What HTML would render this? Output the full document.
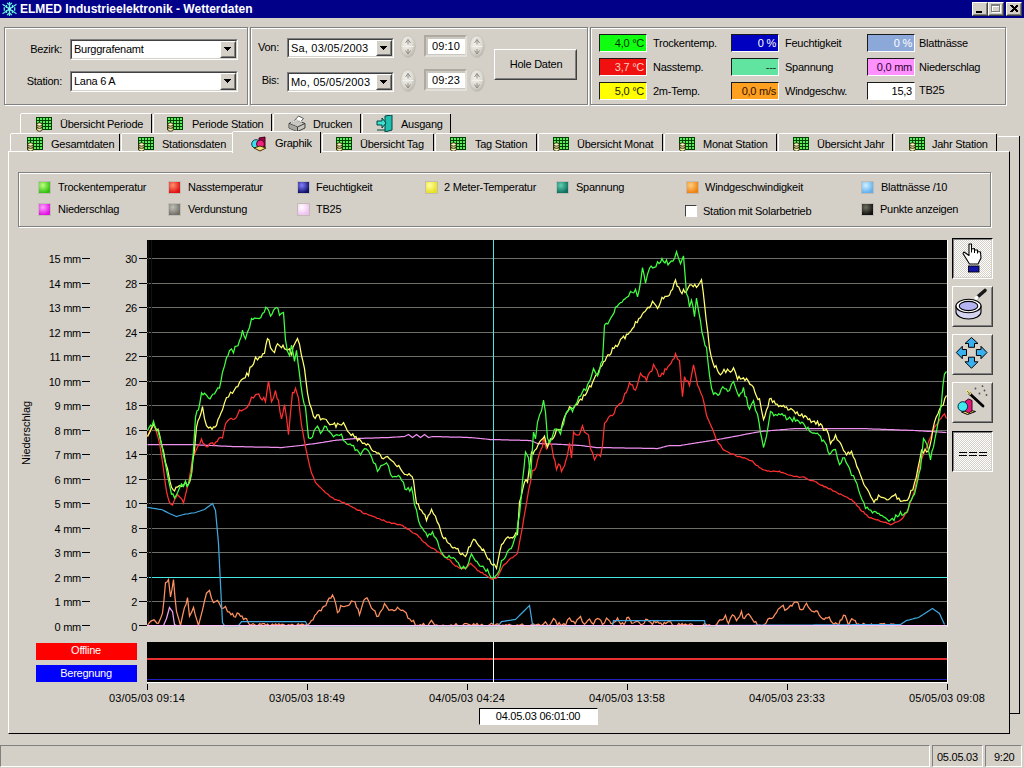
<!DOCTYPE html><html><head><meta charset="utf-8"><style>
html,body{margin:0;padding:0}
body{width:1024px;height:768px;overflow:hidden;position:relative;background:#d4d0c8;font-family:"Liberation Sans",sans-serif;font-size:11px;color:#000}
.a{position:absolute}
.t{position:absolute;white-space:nowrap;line-height:13px}
svg{display:block}
</style></head><body>
<div class="a" style="left:0px;top:0px;width:1024px;height:18px;background:#000088"></div>
<svg class="a" style="left:0px;top:0px" width="19" height="18" viewBox="0 0 19 18"><g stroke="#68ecdc" stroke-width="1.3" fill="none"><path d="M9.5 2v14M2.5 4.3L16.5 13.7M2.5 13.7L16.5 4.3"/><path d="M4.3 7.3v3.4M14.7 7.3v3.4M7 3l2.5 2 2.5-2M7 15l2.5-2 2.5 2M6.5 5v3M12.5 5v3M6.5 10v3M12.5 10v3"/></g><rect x="8" y="7.5" width="3" height="3" fill="#80f4e8"/></svg>
<div class="t" style="left:20px;top:3px;font-size:12px;color:#fff;font-weight:bold;letter-spacing:0px;">ELMED Industrieelektronik - Wetterdaten</div>
<div class="a" style="left:972px;top:2px;width:16px;height:14px;box-sizing:border-box;border:1px solid;border-color:#fff #404040 #404040 #fff;background:#d4d0c8"></div>
<div class="a" style="left:973px;top:3px;width:14px;height:12px;box-sizing:border-box;border:1px solid;border-color:#d4d0c8 #808080 #808080 #d4d0c8"></div>
<div class="a" style="left:976px;top:11px;width:6px;height:2px;background:#000"></div>
<div class="a" style="left:988px;top:2px;width:16px;height:14px;box-sizing:border-box;border:1px solid;border-color:#fff #404040 #404040 #fff;background:#d4d0c8"></div>
<div class="a" style="left:989px;top:3px;width:14px;height:12px;box-sizing:border-box;border:1px solid;border-color:#d4d0c8 #808080 #808080 #d4d0c8"></div>
<div class="a" style="left:992px;top:5px;width:9px;height:8px;box-sizing:border-box;border:1px solid #fff;border-top-width:2px"></div>
<div class="a" style="left:991px;top:4px;width:9px;height:8px;box-sizing:border-box;border:1px solid #808080;border-top-width:2px"></div>
<div class="a" style="left:1006px;top:2px;width:16px;height:14px;box-sizing:border-box;border:1px solid;border-color:#fff #404040 #404040 #fff;background:#d4d0c8"></div>
<div class="a" style="left:1007px;top:3px;width:14px;height:12px;box-sizing:border-box;border:1px solid;border-color:#d4d0c8 #808080 #808080 #d4d0c8"></div>
<svg class="a" style="left:1010px;top:5px" width="8" height="7" shape-rendering="crispEdges"><path d="M0 0h2l2 2 2-2h2v1l-2.5 2.5 2.5 2.5v1h-2l-2-2-2 2h-2v-1l2.5-2.5-2.5-2.5z" fill="#000"/></svg>
<div class="a" style="left:5px;top:28px;width:243px;height:77px;border:1px solid #fff;box-sizing:border-box;width:244px;height:78px"></div>
<div class="a" style="left:4px;top:27px;width:244px;height:78px;border:1px solid #808080;box-sizing:border-box"></div>
<div class="a" style="left:251px;top:28px;width:337px;height:77px;border:1px solid #fff;box-sizing:border-box;width:338px;height:78px"></div>
<div class="a" style="left:250px;top:27px;width:338px;height:78px;border:1px solid #808080;box-sizing:border-box"></div>
<div class="a" style="left:591px;top:28px;width:415px;height:77px;border:1px solid #fff;box-sizing:border-box;width:416px;height:78px"></div>
<div class="a" style="left:590px;top:27px;width:416px;height:78px;border:1px solid #808080;box-sizing:border-box"></div>
<div class="t" style="right:962px;top:43px;font-size:11px;color:#000;letter-spacing:-0.25px;">Bezirk:</div>
<div class="t" style="right:962px;top:75px;font-size:11px;color:#000;letter-spacing:-0.25px;">Station:</div>
<div class="a" style="left:70px;top:39px;width:168px;height:21px;box-sizing:border-box;border:1px solid;border-color:#808080 #fff #fff #808080;background:#fff"></div>
<div class="a" style="left:71px;top:40px;width:166px;height:19px;box-sizing:border-box;border:1px solid;border-color:#404040 #d4d0c8 #d4d0c8 #404040"></div>
<div class="a" style="left:220px;top:41px;width:16px;height:17px;box-sizing:border-box;border:1px solid;border-color:#fff #404040 #404040 #fff;background:#d4d0c8"></div>
<div class="a" style="left:221px;top:42px;width:14px;height:15px;box-sizing:border-box;border:1px solid;border-color:#d4d0c8 #808080 #808080 #d4d0c8"></div>
<svg class="a" style="left:224px;top:47px" width="8" height="5" shape-rendering="crispEdges"><path d="M0 0h7v1h-1v1h-1v1h-1v1h-1v-1h-1v-1h-1v-1h-1z" fill="#000"/></svg>
<div class="t" style="left:74px;top:43px;font-size:11px;color:#000;letter-spacing:-0.25px;">Burggrafenamt</div>
<div class="a" style="left:70px;top:71px;width:168px;height:21px;box-sizing:border-box;border:1px solid;border-color:#808080 #fff #fff #808080;background:#fff"></div>
<div class="a" style="left:71px;top:72px;width:166px;height:19px;box-sizing:border-box;border:1px solid;border-color:#404040 #d4d0c8 #d4d0c8 #404040"></div>
<div class="a" style="left:220px;top:73px;width:16px;height:17px;box-sizing:border-box;border:1px solid;border-color:#fff #404040 #404040 #fff;background:#d4d0c8"></div>
<div class="a" style="left:221px;top:74px;width:14px;height:15px;box-sizing:border-box;border:1px solid;border-color:#d4d0c8 #808080 #808080 #d4d0c8"></div>
<svg class="a" style="left:224px;top:79px" width="8" height="5" shape-rendering="crispEdges"><path d="M0 0h7v1h-1v1h-1v1h-1v1h-1v-1h-1v-1h-1v-1h-1z" fill="#000"/></svg>
<div class="t" style="left:74px;top:75px;font-size:11px;color:#000;letter-spacing:-0.25px;">Lana 6 A</div>
<div class="t" style="right:745px;top:41px;font-size:11px;color:#000;letter-spacing:-0.25px;">Von:</div>
<div class="t" style="right:745px;top:74px;font-size:11px;color:#000;letter-spacing:-0.25px;">Bis:</div>
<div class="a" style="left:287px;top:38px;width:107px;height:20px;box-sizing:border-box;border:1px solid;border-color:#808080 #fff #fff #808080;background:#fff"></div>
<div class="a" style="left:288px;top:39px;width:105px;height:18px;box-sizing:border-box;border:1px solid;border-color:#404040 #d4d0c8 #d4d0c8 #404040"></div>
<div class="a" style="left:376px;top:40px;width:16px;height:16px;box-sizing:border-box;border:1px solid;border-color:#fff #404040 #404040 #fff;background:#d4d0c8"></div>
<div class="a" style="left:377px;top:41px;width:14px;height:14px;box-sizing:border-box;border:1px solid;border-color:#d4d0c8 #808080 #808080 #d4d0c8"></div>
<svg class="a" style="left:380px;top:46px" width="8" height="5" shape-rendering="crispEdges"><path d="M0 0h7v1h-1v1h-1v1h-1v1h-1v-1h-1v-1h-1v-1h-1z" fill="#000"/></svg>
<div class="t" style="left:291px;top:42px;font-size:11px;color:#000;letter-spacing:0.2px;">Sa, 03/05/2003</div>
<div class="a" style="left:287px;top:72px;width:107px;height:20px;box-sizing:border-box;border:1px solid;border-color:#808080 #fff #fff #808080;background:#fff"></div>
<div class="a" style="left:288px;top:73px;width:105px;height:18px;box-sizing:border-box;border:1px solid;border-color:#404040 #d4d0c8 #d4d0c8 #404040"></div>
<div class="a" style="left:376px;top:74px;width:16px;height:16px;box-sizing:border-box;border:1px solid;border-color:#fff #404040 #404040 #fff;background:#d4d0c8"></div>
<div class="a" style="left:377px;top:75px;width:14px;height:14px;box-sizing:border-box;border:1px solid;border-color:#d4d0c8 #808080 #808080 #d4d0c8"></div>
<svg class="a" style="left:380px;top:80px" width="8" height="5" shape-rendering="crispEdges"><path d="M0 0h7v1h-1v1h-1v1h-1v1h-1v-1h-1v-1h-1v-1h-1z" fill="#000"/></svg>
<div class="t" style="left:291px;top:76px;font-size:11px;color:#000;letter-spacing:0.2px;">Mo, 05/05/2003</div>
<svg class="a" style="left:400px;top:35px" width="17" height="24" viewBox="0 0 17 24"><defs><radialGradient id="sg" cx="0.4" cy="0.35" r="0.7"><stop offset="0" stop-color="#f2f1ec"/><stop offset="0.6" stop-color="#dcdad2"/><stop offset="1" stop-color="#b4b0a8"/></radialGradient></defs><ellipse cx="8" cy="11.5" rx="7.4" ry="11" fill="url(#sg)" stroke="#c4c0b8" stroke-width="0.8"/><path d="M5.5 8l2.5-3.5 2.5 3.5M8 4.5v5M5.5 15.5l2.5 3.5 2.5-3.5M8 19v-5" stroke="#908c84" stroke-width="1" fill="none"/><path d="M2.5 11.5h11" stroke="#f4f3ee" stroke-width="1"/></svg>
<svg class="a" style="left:400px;top:69px" width="17" height="24" viewBox="0 0 17 24"><defs><radialGradient id="sg" cx="0.4" cy="0.35" r="0.7"><stop offset="0" stop-color="#f2f1ec"/><stop offset="0.6" stop-color="#dcdad2"/><stop offset="1" stop-color="#b4b0a8"/></radialGradient></defs><ellipse cx="8" cy="11.5" rx="7.4" ry="11" fill="url(#sg)" stroke="#c4c0b8" stroke-width="0.8"/><path d="M5.5 8l2.5-3.5 2.5 3.5M8 4.5v5M5.5 15.5l2.5 3.5 2.5-3.5M8 19v-5" stroke="#908c84" stroke-width="1" fill="none"/><path d="M2.5 11.5h11" stroke="#f4f3ee" stroke-width="1"/></svg>
<svg class="a" style="left:469px;top:35px" width="17" height="24" viewBox="0 0 17 24"><defs><radialGradient id="sg" cx="0.4" cy="0.35" r="0.7"><stop offset="0" stop-color="#f2f1ec"/><stop offset="0.6" stop-color="#dcdad2"/><stop offset="1" stop-color="#b4b0a8"/></radialGradient></defs><ellipse cx="8" cy="11.5" rx="7.4" ry="11" fill="url(#sg)" stroke="#c4c0b8" stroke-width="0.8"/><path d="M5.5 8l2.5-3.5 2.5 3.5M8 4.5v5M5.5 15.5l2.5 3.5 2.5-3.5M8 19v-5" stroke="#908c84" stroke-width="1" fill="none"/><path d="M2.5 11.5h11" stroke="#f4f3ee" stroke-width="1"/></svg>
<svg class="a" style="left:469px;top:69px" width="17" height="24" viewBox="0 0 17 24"><defs><radialGradient id="sg" cx="0.4" cy="0.35" r="0.7"><stop offset="0" stop-color="#f2f1ec"/><stop offset="0.6" stop-color="#dcdad2"/><stop offset="1" stop-color="#b4b0a8"/></radialGradient></defs><ellipse cx="8" cy="11.5" rx="7.4" ry="11" fill="url(#sg)" stroke="#c4c0b8" stroke-width="0.8"/><path d="M5.5 8l2.5-3.5 2.5 3.5M8 4.5v5M5.5 15.5l2.5 3.5 2.5-3.5M8 19v-5" stroke="#908c84" stroke-width="1" fill="none"/><path d="M2.5 11.5h11" stroke="#f4f3ee" stroke-width="1"/></svg>
<div class="a" style="left:424px;top:35px;width:43px;height:22px;box-sizing:border-box;background:#cbc8c0;border:2px solid;border-color:#aeaaa2 #e2e0da #e2e0da #aeaaa2"></div>
<div class="a" style="left:428px;top:39px;width:37px;height:15px;background:#fff"></div>
<div class="t" style="left:432px;top:40px;font-size:11px;color:#000;letter-spacing:0.1px;">09:10</div>
<div class="a" style="left:424px;top:69px;width:43px;height:22px;box-sizing:border-box;background:#cbc8c0;border:2px solid;border-color:#aeaaa2 #e2e0da #e2e0da #aeaaa2"></div>
<div class="a" style="left:428px;top:73px;width:37px;height:15px;background:#fff"></div>
<div class="t" style="left:432px;top:74px;font-size:11px;color:#000;letter-spacing:0.1px;">09:23</div>
<div class="a" style="left:494px;top:49px;width:83px;height:31px;box-sizing:border-box;border:1px solid;border-color:#fff #404040 #404040 #fff;background:#d4d0c8"></div>
<div class="a" style="left:495px;top:50px;width:81px;height:29px;box-sizing:border-box;border:1px solid;border-color:#d4d0c8 #808080 #808080 #d4d0c8"></div>
<div class="t" style="left:386px;width:300px;text-align:center;top:58px;font-size:11px;color:#000;letter-spacing:-0.25px;">Hole Daten</div>
<div class="a" style="left:599px;top:34px;width:48px;height:18px;box-sizing:border-box;border:1px solid;border-color:#1a1a1a #fff #fff #1a1a1a;background:#10ff10"></div>
<div class="t" style="right:380px;top:37px;font-size:11px;color:#003000;letter-spacing:-0.25px;">4,0 °C</div>
<div class="a" style="left:599px;top:58px;width:48px;height:18px;box-sizing:border-box;border:1px solid;border-color:#1a1a1a #fff #fff #1a1a1a;background:#f01010"></div>
<div class="t" style="right:380px;top:61px;font-size:11px;color:#ffd0c0;letter-spacing:-0.25px;">3,7 °C</div>
<div class="a" style="left:599px;top:82px;width:48px;height:18px;box-sizing:border-box;border:1px solid;border-color:#1a1a1a #fff #fff #1a1a1a;background:#ffff00"></div>
<div class="t" style="right:380px;top:85px;font-size:11px;color:#202000;letter-spacing:-0.25px;">5,0 °C</div>
<div class="a" style="left:731px;top:34px;width:48px;height:18px;box-sizing:border-box;border:1px solid;border-color:#1a1a1a #fff #fff #1a1a1a;background:#0000c0"></div>
<div class="t" style="right:248px;top:37px;font-size:11px;color:#ffffff;letter-spacing:-0.25px;">0 %</div>
<div class="a" style="left:731px;top:58px;width:48px;height:18px;box-sizing:border-box;border:1px solid;border-color:#1a1a1a #fff #fff #1a1a1a;background:#60e4a0"></div>
<div class="t" style="right:248px;top:61px;font-size:11px;color:#103020;letter-spacing:-0.25px;">---</div>
<div class="a" style="left:731px;top:82px;width:48px;height:18px;box-sizing:border-box;border:1px solid;border-color:#1a1a1a #fff #fff #1a1a1a;background:#ffa020"></div>
<div class="t" style="right:248px;top:85px;font-size:11px;color:#301000;letter-spacing:-0.25px;">0,0 m/s</div>
<div class="a" style="left:867px;top:34px;width:48px;height:18px;box-sizing:border-box;border:1px solid;border-color:#1a1a1a #fff #fff #1a1a1a;background:#8ca8d8"></div>
<div class="t" style="right:112px;top:37px;font-size:11px;color:#ffffff;letter-spacing:-0.25px;">0 %</div>
<div class="a" style="left:867px;top:58px;width:48px;height:18px;box-sizing:border-box;border:1px solid;border-color:#1a1a1a #fff #fff #1a1a1a;background:#ff90ff"></div>
<div class="t" style="right:112px;top:61px;font-size:11px;color:#300030;letter-spacing:-0.25px;">0,0 mm</div>
<div class="a" style="left:867px;top:82px;width:48px;height:18px;box-sizing:border-box;border:1px solid;border-color:#1a1a1a #fff #fff #1a1a1a;background:#ffffff"></div>
<div class="t" style="right:112px;top:85px;font-size:11px;color:#000;letter-spacing:-0.25px;">15,3</div>
<div class="t" style="left:653px;top:37px;font-size:11px;color:#000;letter-spacing:-0.25px;">Trockentemp.</div>
<div class="t" style="left:653px;top:61px;font-size:11px;color:#000;letter-spacing:-0.25px;">Nasstemp.</div>
<div class="t" style="left:653px;top:85px;font-size:11px;color:#000;letter-spacing:-0.25px;">2m-Temp.</div>
<div class="t" style="left:785px;top:37px;font-size:11px;color:#000;letter-spacing:-0.25px;">Feuchtigkeit</div>
<div class="t" style="left:785px;top:61px;font-size:11px;color:#000;letter-spacing:-0.25px;">Spannung</div>
<div class="t" style="left:785px;top:85px;font-size:11px;color:#000;letter-spacing:-0.25px;">Windgeschw.</div>
<div class="t" style="left:919px;top:37px;font-size:11px;color:#000;letter-spacing:-0.25px;">Blattnässe</div>
<div class="t" style="left:919px;top:61px;font-size:11px;color:#000;letter-spacing:-0.25px;">Niederschlag</div>
<div class="t" style="left:919px;top:84px;font-size:11px;color:#000;letter-spacing:-0.25px;">TB25</div>
<div class="a" style="left:997px;top:136px;width:22px;height:1px;background:#fff"></div>
<div class="a" style="left:1019px;top:136px;width:1px;height:578px;background:#000"></div>
<div class="a" style="left:1009px;top:713px;width:11px;height:1px;background:#000"></div>
<div class="a" style="left:14px;top:151px;width:1px;height:563px;background:#dcd9d2"></div>
<div class="a" style="left:20px;top:113px;width:133px;height:20px;background:#d4d0c8"></div>
<div class="a" style="left:21px;top:113px;width:130px;height:1px;background:#fff"></div>
<div class="a" style="left:20px;top:114px;width:1px;height:19px;background:#fff"></div>
<div class="a" style="left:151px;top:114px;width:1px;height:19px;background:#000"></div>
<svg class="a" style="left:36px;top:117px" width="17" height="16"><rect x="0" y="0" width="16" height="13" fill="#004000"/><g fill="#58f058"><rect x="1" y="1" width="2" height="2"/><rect x="1" y="4" width="2" height="2"/><rect x="1" y="7" width="2" height="2"/><rect x="1" y="10" width="2" height="2"/><rect x="4" y="1" width="2" height="2"/><rect x="4" y="4" width="2" height="2"/><rect x="4" y="7" width="2" height="2"/><rect x="4" y="10" width="2" height="2"/><rect x="7" y="1" width="2" height="2"/><rect x="7" y="4" width="2" height="2"/><rect x="7" y="7" width="2" height="2"/><rect x="7" y="10" width="2" height="2"/><rect x="10" y="1" width="2" height="2"/><rect x="10" y="4" width="2" height="2"/><rect x="10" y="7" width="2" height="2"/><rect x="10" y="10" width="2" height="2"/><rect x="13" y="1" width="2" height="2"/><rect x="13" y="4" width="2" height="2"/><rect x="13" y="7" width="2" height="2"/><rect x="13" y="10" width="2" height="2"/></g><path d="M0.8 7.6v5a2.7 1.6 0 0 0 5.4 0v-5z" fill="#f4f0b0" stroke="#282000" stroke-width="0.9"/><path d="M0.8 9.8a2.7 1.5 0 0 0 5.4 0" fill="none" stroke="#282000" stroke-width="1"/><ellipse cx="3.5" cy="7.5" rx="2.7" ry="1.7" fill="#f8f4c0" stroke="#282000" stroke-width="0.9"/></svg>
<div class="t" style="left:60px;top:118px;font-size:11px;color:#000;letter-spacing:-0.25px;">Übersicht Periode</div>
<div class="a" style="left:153px;top:113px;width:120px;height:20px;background:#d4d0c8"></div>
<div class="a" style="left:154px;top:113px;width:117px;height:1px;background:#fff"></div>
<div class="a" style="left:153px;top:114px;width:1px;height:19px;background:#fff"></div>
<div class="a" style="left:271px;top:114px;width:1px;height:19px;background:#000"></div>
<svg class="a" style="left:167px;top:117px" width="17" height="16"><rect x="0" y="0" width="16" height="13" fill="#004000"/><g fill="#58f058"><rect x="1" y="1" width="2" height="2"/><rect x="1" y="4" width="2" height="2"/><rect x="1" y="7" width="2" height="2"/><rect x="1" y="10" width="2" height="2"/><rect x="4" y="1" width="2" height="2"/><rect x="4" y="4" width="2" height="2"/><rect x="4" y="7" width="2" height="2"/><rect x="4" y="10" width="2" height="2"/><rect x="7" y="1" width="2" height="2"/><rect x="7" y="4" width="2" height="2"/><rect x="7" y="7" width="2" height="2"/><rect x="7" y="10" width="2" height="2"/><rect x="10" y="1" width="2" height="2"/><rect x="10" y="4" width="2" height="2"/><rect x="10" y="7" width="2" height="2"/><rect x="10" y="10" width="2" height="2"/><rect x="13" y="1" width="2" height="2"/><rect x="13" y="4" width="2" height="2"/><rect x="13" y="7" width="2" height="2"/><rect x="13" y="10" width="2" height="2"/></g><path d="M0.8 7.6v5a2.7 1.6 0 0 0 5.4 0v-5z" fill="#f4f0b0" stroke="#282000" stroke-width="0.9"/><path d="M0.8 9.8a2.7 1.5 0 0 0 5.4 0" fill="none" stroke="#282000" stroke-width="1"/><ellipse cx="3.5" cy="7.5" rx="2.7" ry="1.7" fill="#f8f4c0" stroke="#282000" stroke-width="0.9"/></svg>
<div class="t" style="left:192px;top:118px;font-size:11px;color:#000;letter-spacing:-0.25px;">Periode Station</div>
<div class="a" style="left:273px;top:113px;width:89px;height:20px;background:#d4d0c8"></div>
<div class="a" style="left:274px;top:113px;width:86px;height:1px;background:#fff"></div>
<div class="a" style="left:273px;top:114px;width:1px;height:19px;background:#fff"></div>
<div class="a" style="left:360px;top:114px;width:1px;height:19px;background:#000"></div>
<svg class="a" style="left:288px;top:115px" width="18" height="17" viewBox="0 0 18 17"><path d="M6 6l4.5-5 5 2.5-4.5 5z" fill="#fff" stroke="#505050" stroke-width="0.9"/><path d="M1 8.5l7.5-3.5 8.5 3.5v4.5l-7.5 3.5-8.5-3.5z" fill="#c8c8c0" stroke="#303030" stroke-width="0.9"/><path d="M1 8.5l8.5 3.5 7.5-3.5" fill="none" stroke="#303030" stroke-width="0.9"/><path d="M1.5 9l8 3.2v4l-8-3.3z" fill="#a8a8a0"/><path d="M9.5 12v4.5" stroke="#303030" stroke-width="0.9"/><path d="M3 7.5l6-2.5 5 2" fill="none" stroke="#fff" stroke-width="0.9"/></svg>
<div class="t" style="left:313px;top:118px;font-size:11px;color:#000;letter-spacing:-0.25px;">Drucken</div>
<div class="a" style="left:362px;top:113px;width:90px;height:20px;background:#d4d0c8"></div>
<div class="a" style="left:363px;top:113px;width:87px;height:1px;background:#fff"></div>
<div class="a" style="left:362px;top:114px;width:1px;height:19px;background:#fff"></div>
<div class="a" style="left:450px;top:114px;width:1px;height:19px;background:#000"></div>
<svg class="a" style="left:376px;top:115px" width="18" height="17" viewBox="0 0 18 17"><path d="M9 1l7-1v15l-7 2z" fill="#20c0b0" stroke="#004040"/><path d="M1 6h5v-3l4 5-4 5v-3h-5z" fill="#40e0d0" stroke="#004040"/><path d="M1 15h8" stroke="#004040"/></svg>
<div class="t" style="left:401px;top:118px;font-size:11px;color:#000;letter-spacing:-0.25px;">Ausgang</div>
<div class="a" style="left:10px;top:133px;width:111px;height:18px;background:#d4d0c8"></div>
<div class="a" style="left:11px;top:133px;width:108px;height:1px;background:#fff"></div>
<div class="a" style="left:10px;top:134px;width:1px;height:17px;background:#fff"></div>
<div class="a" style="left:119px;top:134px;width:1px;height:17px;background:#000"></div>
<svg class="a" style="left:27px;top:137px" width="17" height="16"><rect x="0" y="0" width="16" height="13" fill="#004000"/><g fill="#58f058"><rect x="1" y="1" width="2" height="2"/><rect x="1" y="4" width="2" height="2"/><rect x="1" y="7" width="2" height="2"/><rect x="1" y="10" width="2" height="2"/><rect x="4" y="1" width="2" height="2"/><rect x="4" y="4" width="2" height="2"/><rect x="4" y="7" width="2" height="2"/><rect x="4" y="10" width="2" height="2"/><rect x="7" y="1" width="2" height="2"/><rect x="7" y="4" width="2" height="2"/><rect x="7" y="7" width="2" height="2"/><rect x="7" y="10" width="2" height="2"/><rect x="10" y="1" width="2" height="2"/><rect x="10" y="4" width="2" height="2"/><rect x="10" y="7" width="2" height="2"/><rect x="10" y="10" width="2" height="2"/><rect x="13" y="1" width="2" height="2"/><rect x="13" y="4" width="2" height="2"/><rect x="13" y="7" width="2" height="2"/><rect x="13" y="10" width="2" height="2"/></g><path d="M0.8 7.6v5a2.7 1.6 0 0 0 5.4 0v-5z" fill="#f4f0b0" stroke="#282000" stroke-width="0.9"/><path d="M0.8 9.8a2.7 1.5 0 0 0 5.4 0" fill="none" stroke="#282000" stroke-width="1"/><ellipse cx="3.5" cy="7.5" rx="2.7" ry="1.7" fill="#f8f4c0" stroke="#282000" stroke-width="0.9"/></svg>
<div class="t" style="left:51px;top:138px;font-size:11px;color:#000;letter-spacing:-0.25px;">Gesamtdaten</div>
<div class="a" style="left:121px;top:133px;width:113px;height:18px;background:#d4d0c8"></div>
<div class="a" style="left:122px;top:133px;width:110px;height:1px;background:#fff"></div>
<div class="a" style="left:121px;top:134px;width:1px;height:17px;background:#fff"></div>
<svg class="a" style="left:138px;top:137px" width="17" height="16"><rect x="0" y="0" width="16" height="13" fill="#004000"/><g fill="#58f058"><rect x="1" y="1" width="2" height="2"/><rect x="1" y="4" width="2" height="2"/><rect x="1" y="7" width="2" height="2"/><rect x="1" y="10" width="2" height="2"/><rect x="4" y="1" width="2" height="2"/><rect x="4" y="4" width="2" height="2"/><rect x="4" y="7" width="2" height="2"/><rect x="4" y="10" width="2" height="2"/><rect x="7" y="1" width="2" height="2"/><rect x="7" y="4" width="2" height="2"/><rect x="7" y="7" width="2" height="2"/><rect x="7" y="10" width="2" height="2"/><rect x="10" y="1" width="2" height="2"/><rect x="10" y="4" width="2" height="2"/><rect x="10" y="7" width="2" height="2"/><rect x="10" y="10" width="2" height="2"/><rect x="13" y="1" width="2" height="2"/><rect x="13" y="4" width="2" height="2"/><rect x="13" y="7" width="2" height="2"/><rect x="13" y="10" width="2" height="2"/></g><path d="M0.8 7.6v5a2.7 1.6 0 0 0 5.4 0v-5z" fill="#f4f0b0" stroke="#282000" stroke-width="0.9"/><path d="M0.8 9.8a2.7 1.5 0 0 0 5.4 0" fill="none" stroke="#282000" stroke-width="1"/><ellipse cx="3.5" cy="7.5" rx="2.7" ry="1.7" fill="#f8f4c0" stroke="#282000" stroke-width="0.9"/></svg>
<div class="t" style="left:162px;top:138px;font-size:11px;color:#000;letter-spacing:-0.25px;">Stationsdaten</div>
<div class="a" style="left:322px;top:133px;width:113px;height:18px;background:#d4d0c8"></div>
<div class="a" style="left:323px;top:133px;width:110px;height:1px;background:#fff"></div>
<div class="a" style="left:322px;top:134px;width:1px;height:17px;background:#fff"></div>
<div class="a" style="left:433px;top:134px;width:1px;height:17px;background:#000"></div>
<svg class="a" style="left:336px;top:137px" width="17" height="16"><rect x="0" y="0" width="16" height="13" fill="#004000"/><g fill="#58f058"><rect x="1" y="1" width="2" height="2"/><rect x="1" y="4" width="2" height="2"/><rect x="1" y="7" width="2" height="2"/><rect x="1" y="10" width="2" height="2"/><rect x="4" y="1" width="2" height="2"/><rect x="4" y="4" width="2" height="2"/><rect x="4" y="7" width="2" height="2"/><rect x="4" y="10" width="2" height="2"/><rect x="7" y="1" width="2" height="2"/><rect x="7" y="4" width="2" height="2"/><rect x="7" y="7" width="2" height="2"/><rect x="7" y="10" width="2" height="2"/><rect x="10" y="1" width="2" height="2"/><rect x="10" y="4" width="2" height="2"/><rect x="10" y="7" width="2" height="2"/><rect x="10" y="10" width="2" height="2"/><rect x="13" y="1" width="2" height="2"/><rect x="13" y="4" width="2" height="2"/><rect x="13" y="7" width="2" height="2"/><rect x="13" y="10" width="2" height="2"/></g><path d="M0.8 7.6v5a2.7 1.6 0 0 0 5.4 0v-5z" fill="#f4f0b0" stroke="#282000" stroke-width="0.9"/><path d="M0.8 9.8a2.7 1.5 0 0 0 5.4 0" fill="none" stroke="#282000" stroke-width="1"/><ellipse cx="3.5" cy="7.5" rx="2.7" ry="1.7" fill="#f8f4c0" stroke="#282000" stroke-width="0.9"/></svg>
<div class="t" style="left:360px;top:138px;font-size:11px;color:#000;letter-spacing:-0.25px;">Übersicht Tag</div>
<div class="a" style="left:435px;top:133px;width:103px;height:18px;background:#d4d0c8"></div>
<div class="a" style="left:436px;top:133px;width:100px;height:1px;background:#fff"></div>
<div class="a" style="left:435px;top:134px;width:1px;height:17px;background:#fff"></div>
<div class="a" style="left:536px;top:134px;width:1px;height:17px;background:#000"></div>
<svg class="a" style="left:450px;top:137px" width="17" height="16"><rect x="0" y="0" width="16" height="13" fill="#004000"/><g fill="#58f058"><rect x="1" y="1" width="2" height="2"/><rect x="1" y="4" width="2" height="2"/><rect x="1" y="7" width="2" height="2"/><rect x="1" y="10" width="2" height="2"/><rect x="4" y="1" width="2" height="2"/><rect x="4" y="4" width="2" height="2"/><rect x="4" y="7" width="2" height="2"/><rect x="4" y="10" width="2" height="2"/><rect x="7" y="1" width="2" height="2"/><rect x="7" y="4" width="2" height="2"/><rect x="7" y="7" width="2" height="2"/><rect x="7" y="10" width="2" height="2"/><rect x="10" y="1" width="2" height="2"/><rect x="10" y="4" width="2" height="2"/><rect x="10" y="7" width="2" height="2"/><rect x="10" y="10" width="2" height="2"/><rect x="13" y="1" width="2" height="2"/><rect x="13" y="4" width="2" height="2"/><rect x="13" y="7" width="2" height="2"/><rect x="13" y="10" width="2" height="2"/></g><path d="M0.8 7.6v5a2.7 1.6 0 0 0 5.4 0v-5z" fill="#f4f0b0" stroke="#282000" stroke-width="0.9"/><path d="M0.8 9.8a2.7 1.5 0 0 0 5.4 0" fill="none" stroke="#282000" stroke-width="1"/><ellipse cx="3.5" cy="7.5" rx="2.7" ry="1.7" fill="#f8f4c0" stroke="#282000" stroke-width="0.9"/></svg>
<div class="t" style="left:475px;top:138px;font-size:11px;color:#000;letter-spacing:-0.25px;">Tag Station</div>
<div class="a" style="left:538px;top:133px;width:126px;height:18px;background:#d4d0c8"></div>
<div class="a" style="left:539px;top:133px;width:123px;height:1px;background:#fff"></div>
<div class="a" style="left:538px;top:134px;width:1px;height:17px;background:#fff"></div>
<div class="a" style="left:662px;top:134px;width:1px;height:17px;background:#000"></div>
<svg class="a" style="left:553px;top:137px" width="17" height="16"><rect x="0" y="0" width="16" height="13" fill="#004000"/><g fill="#58f058"><rect x="1" y="1" width="2" height="2"/><rect x="1" y="4" width="2" height="2"/><rect x="1" y="7" width="2" height="2"/><rect x="1" y="10" width="2" height="2"/><rect x="4" y="1" width="2" height="2"/><rect x="4" y="4" width="2" height="2"/><rect x="4" y="7" width="2" height="2"/><rect x="4" y="10" width="2" height="2"/><rect x="7" y="1" width="2" height="2"/><rect x="7" y="4" width="2" height="2"/><rect x="7" y="7" width="2" height="2"/><rect x="7" y="10" width="2" height="2"/><rect x="10" y="1" width="2" height="2"/><rect x="10" y="4" width="2" height="2"/><rect x="10" y="7" width="2" height="2"/><rect x="10" y="10" width="2" height="2"/><rect x="13" y="1" width="2" height="2"/><rect x="13" y="4" width="2" height="2"/><rect x="13" y="7" width="2" height="2"/><rect x="13" y="10" width="2" height="2"/></g><path d="M0.8 7.6v5a2.7 1.6 0 0 0 5.4 0v-5z" fill="#f4f0b0" stroke="#282000" stroke-width="0.9"/><path d="M0.8 9.8a2.7 1.5 0 0 0 5.4 0" fill="none" stroke="#282000" stroke-width="1"/><ellipse cx="3.5" cy="7.5" rx="2.7" ry="1.7" fill="#f8f4c0" stroke="#282000" stroke-width="0.9"/></svg>
<div class="t" style="left:577px;top:138px;font-size:11px;color:#000;letter-spacing:-0.25px;">Übersicht Monat</div>
<div class="a" style="left:664px;top:133px;width:114px;height:18px;background:#d4d0c8"></div>
<div class="a" style="left:665px;top:133px;width:111px;height:1px;background:#fff"></div>
<div class="a" style="left:664px;top:134px;width:1px;height:17px;background:#fff"></div>
<div class="a" style="left:776px;top:134px;width:1px;height:17px;background:#000"></div>
<svg class="a" style="left:679px;top:137px" width="17" height="16"><rect x="0" y="0" width="16" height="13" fill="#004000"/><g fill="#58f058"><rect x="1" y="1" width="2" height="2"/><rect x="1" y="4" width="2" height="2"/><rect x="1" y="7" width="2" height="2"/><rect x="1" y="10" width="2" height="2"/><rect x="4" y="1" width="2" height="2"/><rect x="4" y="4" width="2" height="2"/><rect x="4" y="7" width="2" height="2"/><rect x="4" y="10" width="2" height="2"/><rect x="7" y="1" width="2" height="2"/><rect x="7" y="4" width="2" height="2"/><rect x="7" y="7" width="2" height="2"/><rect x="7" y="10" width="2" height="2"/><rect x="10" y="1" width="2" height="2"/><rect x="10" y="4" width="2" height="2"/><rect x="10" y="7" width="2" height="2"/><rect x="10" y="10" width="2" height="2"/><rect x="13" y="1" width="2" height="2"/><rect x="13" y="4" width="2" height="2"/><rect x="13" y="7" width="2" height="2"/><rect x="13" y="10" width="2" height="2"/></g><path d="M0.8 7.6v5a2.7 1.6 0 0 0 5.4 0v-5z" fill="#f4f0b0" stroke="#282000" stroke-width="0.9"/><path d="M0.8 9.8a2.7 1.5 0 0 0 5.4 0" fill="none" stroke="#282000" stroke-width="1"/><ellipse cx="3.5" cy="7.5" rx="2.7" ry="1.7" fill="#f8f4c0" stroke="#282000" stroke-width="0.9"/></svg>
<div class="t" style="left:703px;top:138px;font-size:11px;color:#000;letter-spacing:-0.25px;">Monat Station</div>
<div class="a" style="left:778px;top:133px;width:116px;height:18px;background:#d4d0c8"></div>
<div class="a" style="left:779px;top:133px;width:113px;height:1px;background:#fff"></div>
<div class="a" style="left:778px;top:134px;width:1px;height:17px;background:#fff"></div>
<div class="a" style="left:892px;top:134px;width:1px;height:17px;background:#000"></div>
<svg class="a" style="left:793px;top:137px" width="17" height="16"><rect x="0" y="0" width="16" height="13" fill="#004000"/><g fill="#58f058"><rect x="1" y="1" width="2" height="2"/><rect x="1" y="4" width="2" height="2"/><rect x="1" y="7" width="2" height="2"/><rect x="1" y="10" width="2" height="2"/><rect x="4" y="1" width="2" height="2"/><rect x="4" y="4" width="2" height="2"/><rect x="4" y="7" width="2" height="2"/><rect x="4" y="10" width="2" height="2"/><rect x="7" y="1" width="2" height="2"/><rect x="7" y="4" width="2" height="2"/><rect x="7" y="7" width="2" height="2"/><rect x="7" y="10" width="2" height="2"/><rect x="10" y="1" width="2" height="2"/><rect x="10" y="4" width="2" height="2"/><rect x="10" y="7" width="2" height="2"/><rect x="10" y="10" width="2" height="2"/><rect x="13" y="1" width="2" height="2"/><rect x="13" y="4" width="2" height="2"/><rect x="13" y="7" width="2" height="2"/><rect x="13" y="10" width="2" height="2"/></g><path d="M0.8 7.6v5a2.7 1.6 0 0 0 5.4 0v-5z" fill="#f4f0b0" stroke="#282000" stroke-width="0.9"/><path d="M0.8 9.8a2.7 1.5 0 0 0 5.4 0" fill="none" stroke="#282000" stroke-width="1"/><ellipse cx="3.5" cy="7.5" rx="2.7" ry="1.7" fill="#f8f4c0" stroke="#282000" stroke-width="0.9"/></svg>
<div class="t" style="left:817px;top:138px;font-size:11px;color:#000;letter-spacing:-0.25px;">Übersicht Jahr</div>
<div class="a" style="left:894px;top:133px;width:104px;height:18px;background:#d4d0c8"></div>
<div class="a" style="left:895px;top:133px;width:101px;height:1px;background:#fff"></div>
<div class="a" style="left:894px;top:134px;width:1px;height:17px;background:#fff"></div>
<div class="a" style="left:996px;top:134px;width:1px;height:17px;background:#000"></div>
<svg class="a" style="left:909px;top:137px" width="17" height="16"><rect x="0" y="0" width="16" height="13" fill="#004000"/><g fill="#58f058"><rect x="1" y="1" width="2" height="2"/><rect x="1" y="4" width="2" height="2"/><rect x="1" y="7" width="2" height="2"/><rect x="1" y="10" width="2" height="2"/><rect x="4" y="1" width="2" height="2"/><rect x="4" y="4" width="2" height="2"/><rect x="4" y="7" width="2" height="2"/><rect x="4" y="10" width="2" height="2"/><rect x="7" y="1" width="2" height="2"/><rect x="7" y="4" width="2" height="2"/><rect x="7" y="7" width="2" height="2"/><rect x="7" y="10" width="2" height="2"/><rect x="10" y="1" width="2" height="2"/><rect x="10" y="4" width="2" height="2"/><rect x="10" y="7" width="2" height="2"/><rect x="10" y="10" width="2" height="2"/><rect x="13" y="1" width="2" height="2"/><rect x="13" y="4" width="2" height="2"/><rect x="13" y="7" width="2" height="2"/><rect x="13" y="10" width="2" height="2"/></g><path d="M0.8 7.6v5a2.7 1.6 0 0 0 5.4 0v-5z" fill="#f4f0b0" stroke="#282000" stroke-width="0.9"/><path d="M0.8 9.8a2.7 1.5 0 0 0 5.4 0" fill="none" stroke="#282000" stroke-width="1"/><ellipse cx="3.5" cy="7.5" rx="2.7" ry="1.7" fill="#f8f4c0" stroke="#282000" stroke-width="0.9"/></svg>
<div class="t" style="left:932px;top:138px;font-size:11px;color:#000;letter-spacing:-0.25px;">Jahr Station</div>
<div class="a" style="left:8px;top:151px;width:1002px;height:583px;box-sizing:border-box;border:1px solid;border-color:#fff #000 #000 #fff;background:#d4d0c8"></div>
<div class="a" style="left:232px;top:131px;width:90px;height:22px;background:#d4d0c8"></div>
<div class="a" style="left:233px;top:131px;width:87px;height:1px;background:#fff"></div>
<div class="a" style="left:232px;top:132px;width:1px;height:21px;background:#fff"></div>
<div class="a" style="left:320px;top:132px;width:1px;height:21px;background:#000"></div>
<svg class="a" style="left:251px;top:136px" width="18" height="16" viewBox="0 0 18 16"><path d="M8 2l6-1v10l-6 2z" fill="#a00040" stroke="#400020"/><circle cx="5" cy="8" r="4.3" fill="#40e0f0" stroke="#004050"/><circle cx="9.5" cy="8" r="4" fill="#f02080" stroke="#500020"/><path d="M3 12l6-2 6 2-6 3z" fill="#f0e080" stroke="#403000"/></svg>
<div class="t" style="left:275px;top:137px;font-size:11px;color:#000;letter-spacing:-0.25px;">Graphik</div>
<div class="a" style="left:19px;top:173px;width:972px;height:54px;border:1px solid #fff;box-sizing:border-box;width:973px;height:55px"></div>
<div class="a" style="left:18px;top:172px;width:973px;height:55px;border:1px solid #808080;box-sizing:border-box"></div>
<div class="a" style="left:38px;top:181px;width:13px;height:13px;box-sizing:border-box;border:1px solid #c0bcb4;background:radial-gradient(circle at 35% 30%, #c0ff80 0%, #30c010 75%)"></div>
<div class="t" style="left:58px;top:181px;font-size:11px;color:#000;letter-spacing:-0.25px;">Trockentemperatur</div>
<div class="a" style="left:168px;top:181px;width:13px;height:13px;box-sizing:border-box;border:1px solid #c0bcb4;background:radial-gradient(circle at 35% 30%, #ff9070 0%, #e01010 75%)"></div>
<div class="t" style="left:188px;top:181px;font-size:11px;color:#000;letter-spacing:-0.25px;">Nasstemperatur</div>
<div class="a" style="left:297px;top:181px;width:13px;height:13px;box-sizing:border-box;border:1px solid #c0bcb4;background:radial-gradient(circle at 35% 30%, #8080ff 0%, #10106a 75%)"></div>
<div class="t" style="left:316px;top:181px;font-size:11px;color:#000;letter-spacing:-0.25px;">Feuchtigkeit</div>
<div class="a" style="left:425px;top:181px;width:13px;height:13px;box-sizing:border-box;border:1px solid #c0bcb4;background:radial-gradient(circle at 35% 30%, #ffffa0 0%, #e8e020 75%)"></div>
<div class="t" style="left:444px;top:181px;font-size:11px;color:#000;letter-spacing:-0.25px;">2 Meter-Temperatur</div>
<div class="a" style="left:556px;top:181px;width:13px;height:13px;box-sizing:border-box;border:1px solid #c0bcb4;background:radial-gradient(circle at 35% 30%, #60d0b0 0%, #107060 75%)"></div>
<div class="t" style="left:576px;top:181px;font-size:11px;color:#000;letter-spacing:-0.25px;">Spannung</div>
<div class="a" style="left:686px;top:181px;width:13px;height:13px;box-sizing:border-box;border:1px solid #c0bcb4;background:radial-gradient(circle at 35% 30%, #ffd080 0%, #f08010 75%)"></div>
<div class="t" style="left:705px;top:181px;font-size:11px;color:#000;letter-spacing:-0.25px;">Windgeschwindigkeit</div>
<div class="a" style="left:861px;top:181px;width:13px;height:13px;box-sizing:border-box;border:1px solid #c0bcb4;background:radial-gradient(circle at 35% 30%, #d0f0ff 0%, #60b0f0 75%)"></div>
<div class="t" style="left:881px;top:181px;font-size:11px;color:#000;letter-spacing:-0.25px;">Blattnässe /10</div>
<div class="a" style="left:38px;top:203px;width:13px;height:13px;box-sizing:border-box;border:1px solid #c0bcb4;background:radial-gradient(circle at 35% 30%, #ffa0ff 0%, #e010e0 75%)"></div>
<div class="t" style="left:58px;top:203px;font-size:11px;color:#000;letter-spacing:-0.25px;">Niederschlag</div>
<div class="a" style="left:168px;top:203px;width:13px;height:13px;box-sizing:border-box;border:1px solid #c0bcb4;background:radial-gradient(circle at 35% 30%, #c0c0b8 0%, #707068 75%)"></div>
<div class="t" style="left:188px;top:203px;font-size:11px;color:#000;letter-spacing:-0.25px;">Verdunstung</div>
<div class="a" style="left:297px;top:203px;width:13px;height:13px;box-sizing:border-box;border:1px solid #c0bcb4;background:radial-gradient(circle at 35% 30%, #ffffff 0%, #f0c0f0 75%)"></div>
<div class="t" style="left:316px;top:203px;font-size:11px;color:#000;letter-spacing:-0.25px;">TB25</div>
<div class="a" style="left:861px;top:203px;width:13px;height:13px;box-sizing:border-box;border:1px solid #c0bcb4;background:radial-gradient(circle at 35% 30%, #707060 0%, #101010 75%)"></div>
<div class="t" style="left:880px;top:203px;font-size:11px;color:#000;letter-spacing:-0.25px;">Punkte anzeigen</div>
<div class="a" style="left:685px;top:205px;width:12px;height:12px;box-sizing:border-box;border:1px solid;border-color:#404040 #fff #fff #404040;background:#fff"></div>
<div class="t" style="left:703px;top:205px;font-size:11px;color:#000;letter-spacing:-0.25px;">Station mit Solarbetrieb</div>
<svg class="a" style="left:0;top:0" width="1024" height="768" viewBox="0 0 1024 768"><rect x="147" y="240" width="800" height="386" fill="#000"/><rect x="947" y="240" width="1" height="387" fill="#fff"/><rect x="147" y="601" width="800" height="1" fill="#6e6e68"/><rect x="139" y="601" width="8" height="1" fill="#000"/><rect x="82" y="601" width="8" height="1" fill="#000"/><rect x="147" y="577" width="800" height="1" fill="#48e8e8"/><rect x="139" y="577" width="8" height="1" fill="#000"/><rect x="82" y="577" width="8" height="1" fill="#000"/><rect x="147" y="552" width="800" height="1" fill="#6e6e68"/><rect x="139" y="552" width="8" height="1" fill="#000"/><rect x="82" y="552" width="8" height="1" fill="#000"/><rect x="147" y="528" width="800" height="1" fill="#6e6e68"/><rect x="139" y="528" width="8" height="1" fill="#000"/><rect x="82" y="528" width="8" height="1" fill="#000"/><rect x="147" y="503" width="800" height="1" fill="#6e6e68"/><rect x="139" y="503" width="8" height="1" fill="#000"/><rect x="82" y="503" width="8" height="1" fill="#000"/><rect x="147" y="479" width="800" height="1" fill="#6e6e68"/><rect x="139" y="479" width="8" height="1" fill="#000"/><rect x="82" y="479" width="8" height="1" fill="#000"/><rect x="147" y="454" width="800" height="1" fill="#6e6e68"/><rect x="139" y="454" width="8" height="1" fill="#000"/><rect x="82" y="454" width="8" height="1" fill="#000"/><rect x="147" y="430" width="800" height="1" fill="#6e6e68"/><rect x="139" y="430" width="8" height="1" fill="#000"/><rect x="82" y="430" width="8" height="1" fill="#000"/><rect x="147" y="405" width="800" height="1" fill="#6e6e68"/><rect x="139" y="405" width="8" height="1" fill="#000"/><rect x="82" y="405" width="8" height="1" fill="#000"/><rect x="147" y="381" width="800" height="1" fill="#6e6e68"/><rect x="139" y="381" width="8" height="1" fill="#000"/><rect x="82" y="381" width="8" height="1" fill="#000"/><rect x="147" y="356" width="800" height="1" fill="#6e6e68"/><rect x="139" y="356" width="8" height="1" fill="#000"/><rect x="82" y="356" width="8" height="1" fill="#000"/><rect x="147" y="332" width="800" height="1" fill="#6e6e68"/><rect x="139" y="332" width="8" height="1" fill="#000"/><rect x="82" y="332" width="8" height="1" fill="#000"/><rect x="147" y="307" width="800" height="1" fill="#6e6e68"/><rect x="139" y="307" width="8" height="1" fill="#000"/><rect x="82" y="307" width="8" height="1" fill="#000"/><rect x="147" y="283" width="800" height="1" fill="#6e6e68"/><rect x="139" y="283" width="8" height="1" fill="#000"/><rect x="82" y="283" width="8" height="1" fill="#000"/><rect x="147" y="258" width="800" height="1" fill="#6e6e68"/><rect x="139" y="258" width="8" height="1" fill="#000"/><rect x="82" y="258" width="8" height="1" fill="#000"/><rect x="139" y="625" width="8" height="1" fill="#000"/><rect x="82" y="625" width="8" height="1" fill="#000"/><rect x="148" y="240" width="1" height="386" fill="#121210"/><rect x="151" y="240" width="1" height="386" fill="#121210"/><rect x="493" y="240" width="1" height="386" fill="#48e8e8"/><polyline points="147.5,625.5 149.2,623.0 150.8,621.1 152.5,620.4 154.0,619.8 155.5,621.5 157.0,623.4 158.5,623.1 160.5,618.6 162.5,613.1 164.0,599.8 165.5,582.7 167.0,582.1 168.5,579.7 170.5,596.9 172.0,589.4 173.5,579.5 175.0,597.6 176.5,611.5 178.5,618.2 180.5,625.5 182.5,616.0 184.5,607.4 186.0,604.6 187.5,597.6 189.5,616.1 191.5,612.4 193.5,607.4 195.2,614.7 196.8,619.9 198.5,625.5 200.5,617.6 202.5,610.1 204.5,601.0 206.5,593.2 208.0,591.8 209.5,590.5 211.5,598.2 213.5,602.7 215.5,601.5 217.5,600.4 219.5,603.7 221.5,608.3 223.5,608.1 225.5,606.6 227.5,611.7 229.5,612.1 231.0,614.8 232.5,613.5 234.0,616.8 235.5,617.0 237.2,613.0 238.8,613.6 240.5,616.3 242.0,615.9 243.5,619.6 245.0,618.5 246.5,618.6 248.2,622.7 249.8,625.1 251.5,624.5 253.1,623.7 254.7,624.8 256.3,625.5 257.9,625.5 259.6,623.8 261.2,624.4 262.8,623.7 264.4,623.6 266.0,625.5 267.6,624.1 269.2,625.5 270.8,625.3 272.4,624.1 274.1,625.5 275.7,623.9 277.3,625.5 278.9,623.8 280.5,625.2 282.1,624.2 283.7,624.5 285.3,625.5 286.9,625.5 288.6,624.6 290.2,625.5 291.8,624.2 293.4,625.0 295.0,625.5 296.6,625.5 298.2,623.7 299.8,625.5 301.4,624.2 303.1,624.4 304.7,625.5 306.3,624.7 307.9,624.6 309.5,623.6 311.2,620.7 313.0,619.9 314.8,615.4 316.5,613.9 318.0,611.4 319.5,610.3 321.0,611.0 322.5,607.4 324.2,606.2 325.8,605.8 327.5,601.1 329.2,598.0 330.8,598.3 332.5,594.9 334.2,598.4 335.8,604.1 337.5,612.6 339.2,611.1 340.8,605.5 342.5,606.5 344.2,606.7 346.0,606.0 347.8,605.7 349.5,604.8 351.5,601.0 353.5,601.5 355.0,601.8 356.5,607.4 358.0,608.9 359.5,614.9 361.0,609.9 362.5,604.6 364.0,600.1 365.5,598.5 367.0,597.9 368.5,600.8 370.0,604.5 371.5,608.1 373.2,609.8 375.0,611.0 376.8,616.6 378.5,616.2 380.0,612.4 381.5,610.5 383.0,608.3 384.5,603.6 386.0,605.6 387.5,607.9 389.0,610.3 390.5,609.9 392.2,609.6 394.0,610.7 395.8,609.9 397.5,607.2 399.2,609.1 401.0,610.4 402.8,610.2 404.5,611.5 406.2,612.9 408.0,618.3 409.8,618.9 411.5,621.5 413.5,620.4 415.5,625.5 417.1,625.4 418.6,625.5 420.2,624.7 421.8,625.5 423.4,623.6 424.9,625.5 426.5,625.5 428.2,625.3 429.8,622.5 431.5,620.4 433.2,622.8 434.8,625.3 436.5,624.8 438.1,625.5 439.8,625.5 441.4,625.5 443.0,625.1 444.6,625.5 446.2,625.5 447.9,625.5 449.5,625.5 451.1,625.0 452.8,625.5 454.4,625.5 456.0,623.7 457.6,625.5 459.2,625.5 460.9,625.5 462.5,625.5 464.5,623.5 466.5,623.5 468.5,624.4 470.5,625.2 472.1,625.5 473.7,623.7 475.3,625.5 477.0,623.4 478.6,625.5 480.2,625.4 481.8,624.3 483.4,625.5 485.0,625.5 486.6,625.5 488.2,625.5 489.9,624.4 491.5,623.3 493.1,624.6 494.7,625.5 496.3,624.2 497.9,624.0 499.5,625.5 501.2,625.5 502.8,625.2 504.4,625.5 506.0,624.7 507.6,625.5 509.2,624.2 510.8,625.2 512.5,625.5 514.1,625.5 515.7,625.5 517.3,625.0 518.9,625.5 520.5,624.7 522.1,623.9 523.8,625.5 525.4,625.5 527.0,625.5 528.6,625.5 530.2,625.5 531.8,624.5 533.4,624.0 535.0,625.3 536.7,624.5 538.3,624.2 539.9,625.1 541.5,625.5 543.5,624.0 545.5,621.7 547.5,625.0 549.5,625.5 551.5,622.3 553.5,618.6 555.5,620.4 557.5,625.5 559.1,622.5 560.7,625.4 562.3,624.8 563.9,623.7 565.5,625.5 567.5,619.9 569.5,617.9 571.5,621.3 573.5,621.4 575.2,623.7 577.0,619.8 578.8,618.2 580.5,616.5 582.5,622.1 584.5,624.3 586.2,622.7 587.8,620.5 589.5,618.9 591.5,622.5 593.5,624.3 595.5,619.7 597.5,618.4 599.2,619.1 600.8,620.3 602.5,624.4 604.5,622.9 606.5,618.1 608.0,619.5 609.5,620.8 611.0,623.4 612.5,623.6 614.2,622.3 615.8,621.3 617.5,618.0 619.2,621.8 620.8,624.3 622.5,622.7 624.0,624.7 625.5,622.0 627.0,617.6 628.5,617.3 630.2,620.1 631.8,623.3 633.5,623.0 635.5,621.8 637.5,621.2 639.2,622.5 640.8,624.8 642.5,624.3 644.2,623.2 645.8,619.2 647.5,619.5 649.2,621.6 650.8,622.5 652.5,624.5 654.2,620.9 655.8,622.6 657.5,621.6 659.2,623.3 660.8,623.0 662.5,625.5 664.2,622.4 665.8,623.6 667.5,622.1 669.2,621.5 670.8,622.0 672.5,625.2 674.1,625.5 675.7,625.5 677.3,625.4 678.9,623.4 680.5,625.5 682.1,623.6 683.6,625.5 685.2,624.1 686.8,624.8 688.4,625.5 690.0,623.9 691.6,624.0 693.2,625.5 694.8,625.5 696.4,625.5 698.0,625.5 699.6,625.5 701.2,625.5 702.8,625.5 704.4,623.7 705.9,624.3 707.5,625.5 709.1,624.6 710.7,625.5 712.3,625.5 713.9,625.5 715.5,625.5 717.0,624.0 718.5,621.2 720.0,619.7 721.5,620.0 723.5,619.3 725.5,615.2 727.0,620.5 728.5,623.6 730.5,618.1 732.5,614.8 734.5,616.2 736.5,620.7 738.2,618.2 739.8,616.3 741.5,611.4 743.0,618.1 744.5,618.6 746.5,615.1 748.5,613.8 750.5,616.3 752.5,619.5 754.2,622.3 755.8,621.6 757.5,625.5 759.2,625.1 761.0,625.5 762.8,625.5 764.5,624.5 766.2,623.0 767.8,619.2 769.5,618.2 771.2,618.6 773.0,617.8 774.8,614.6 776.5,612.7 778.2,609.1 779.8,608.0 781.5,606.4 783.2,605.2 784.8,610.4 786.5,609.4 788.5,607.7 790.5,605.3 792.0,606.1 793.5,603.2 795.0,602.1 796.5,602.0 798.2,603.1 799.8,609.2 801.5,609.8 803.2,609.2 804.8,605.7 806.5,603.2 808.2,607.0 809.8,608.9 811.5,611.0 813.0,611.4 814.5,612.1 816.0,610.8 817.5,611.2 819.2,615.1 820.8,617.1 822.5,618.6 824.2,619.4 825.8,617.7 827.5,618.1 829.2,617.0 830.8,620.9 832.5,622.9 834.0,624.3 835.5,622.7 837.0,623.7 838.5,625.5 840.2,620.3 841.8,619.7 843.5,615.2 845.2,615.6 846.8,619.7 848.5,625.5 850.2,621.4 851.8,618.7 853.5,620.0 855.2,620.5 856.8,624.4 858.5,623.9 860.1,625.1 861.7,625.5 863.3,623.4 865.0,624.2 866.6,625.5 868.2,625.5 869.8,625.5 871.4,623.8 873.0,625.5 874.7,625.5 876.3,625.5 877.9,625.5 879.5,624.1 881.1,623.6 882.7,623.8 884.3,623.5 886.0,625.5 887.6,625.5 889.2,625.5 890.8,623.9 892.4,624.1 894.0,624.2 895.7,625.5 897.3,625.5 898.9,625.5 900.5,625.5" fill="none" stroke="#ff9060" stroke-width="1.25"/><polyline points="163.5,625.5 165.0,622.0 166.5,618.5 168.0,613.0 169.5,607.5 171.0,609.5 172.5,611.5 174.5,624.5 176.5,625.5" fill="none" stroke="#f0a0f0" stroke-width="1.25"/><polyline points="147.5,507.5 149.1,507.7 150.6,507.9 152.2,508.2 153.7,508.4 155.3,508.6 156.8,508.8 158.4,509.1 159.9,509.3 161.5,509.5 163.1,510.3 164.7,511.1 166.3,511.9 167.9,512.7 169.5,513.5 171.2,514.2 173.0,515.0 174.8,515.8 176.5,516.5 178.2,516.0 180.0,515.5 181.8,515.0 183.5,514.5 185.0,514.2 186.5,514.0 188.0,513.8 189.5,513.5 191.0,513.2 192.5,513.0 194.0,512.8 195.5,512.5 197.0,512.0 198.5,511.5 200.0,511.0 201.5,510.5 203.0,510.0 204.5,509.5 206.1,508.3 207.7,507.1 209.3,505.9 210.9,504.7 212.5,503.5 214.0,507.0 215.5,510.5 217.0,527.0 218.5,543.5 220.5,584.5 222.5,622.5 224.5,625.5 226.1,625.5 227.6,625.5 229.2,625.5 230.7,625.5 232.3,625.5 233.8,625.5 235.4,625.5 236.9,625.5 238.5,625.5 240.0,623.5 241.5,621.5 243.1,621.5 244.7,621.5 246.3,621.5 247.9,621.5 249.5,621.5 251.1,621.5 252.7,621.5 254.3,621.5 255.9,621.5 257.5,621.5 259.1,621.5 260.7,621.5 262.3,621.5 263.9,621.5 265.5,621.5 267.1,621.5 268.7,621.5 270.3,621.5 271.9,621.5 273.5,621.5 275.1,621.5 276.7,621.5 278.3,621.5 279.9,621.5 281.5,621.5 283.1,621.5 284.7,621.5 286.3,621.5 287.9,621.5 289.5,621.5 291.1,621.5 292.7,621.5 294.3,621.5 295.9,621.5 297.5,621.5 299.1,621.5 300.7,621.5 302.3,621.5 303.9,621.5 305.5,621.5 307.5,625.5 309.1,625.5 310.7,625.5 312.3,625.5 313.9,625.5 315.5,625.5 317.1,625.5 318.7,625.5 320.3,625.5 321.9,625.5 323.6,625.5 325.2,625.5 326.8,625.5 328.4,625.5 330.0,625.5 331.6,625.5 333.2,625.5 334.8,625.5 336.4,625.5 338.0,625.5 339.6,625.5 341.2,625.5 342.8,625.5 344.4,625.5 346.0,625.5 347.6,625.5 349.2,625.5 350.8,625.5 352.4,625.5 354.0,625.5 355.7,625.5 357.3,625.5 358.9,625.5 360.5,625.5 362.1,625.5 363.7,625.5 365.3,625.5 366.9,625.5 368.5,625.5 370.1,625.5 371.7,625.5 373.3,625.5 374.9,625.5 376.5,625.5 378.1,625.5 379.7,625.5 381.3,625.5 382.9,625.5 384.5,625.5 386.1,625.5 387.8,625.5 389.4,625.5 391.0,625.5 392.6,625.5 394.2,625.5 395.8,625.5 397.4,625.5 399.0,625.5 400.6,625.5 402.2,625.5 403.8,625.5 405.4,625.5 407.0,625.5 408.6,625.5 410.2,625.5 411.8,625.5 413.4,625.5 415.0,625.5 416.6,625.5 418.2,625.5 419.9,625.5 421.5,625.5 423.1,625.5 424.7,625.5 426.3,625.5 427.9,625.5 429.5,625.5 431.1,625.5 432.7,625.5 434.3,625.5 435.9,625.5 437.5,625.5 439.1,625.5 440.7,625.5 442.3,625.5 443.9,625.5 445.5,625.5 447.1,625.5 448.7,625.5 450.3,625.5 452.0,625.5 453.6,625.5 455.2,625.5 456.8,625.5 458.4,625.5 460.0,625.5 461.6,625.5 463.2,625.5 464.8,625.5 466.4,625.5 468.0,625.5 469.6,625.5 471.2,625.5 472.8,625.5 474.4,625.5 476.0,625.5 477.6,625.5 479.2,625.5 480.8,625.5 482.4,625.5 484.1,625.5 485.7,625.5 487.3,625.5 488.9,625.5 490.5,625.5 492.1,625.5 493.7,625.5 495.3,625.5 496.9,625.5 498.5,625.5 500.0,623.5 501.5,621.5 503.1,621.3 504.6,621.1 506.2,620.8 507.7,620.6 509.3,620.4 510.8,620.2 512.4,619.9 513.9,619.7 515.5,619.5 517.1,617.9 518.6,616.4 520.2,614.8 521.7,613.3 523.3,611.7 524.8,610.2 526.4,608.6 527.9,607.1 529.5,605.5 531.0,615.0 532.5,624.5 534.5,625.5 536.1,625.5 537.7,625.5 539.3,625.5 540.9,625.5 542.5,625.5 544.1,625.5 545.6,625.5 547.2,625.5 548.8,625.5 550.4,625.5 552.0,625.5 553.6,625.5 555.2,625.5 556.8,625.5 558.4,625.5 560.0,625.5 561.6,625.5 563.2,625.5 564.7,625.5 566.3,625.5 567.9,625.5 569.5,625.5 571.1,625.5 572.7,625.5 574.3,625.5 575.9,625.5 577.5,625.5 579.1,625.5 580.7,625.5 582.3,625.5 583.8,625.5 585.4,625.5 587.0,625.5 588.6,625.5 590.2,625.5 591.8,625.5 593.4,625.5 595.0,625.5 596.6,625.5 598.2,625.5 599.8,625.5 601.4,625.5 602.9,625.5 604.5,625.5 606.1,625.5 607.7,625.5 609.3,625.5 610.9,625.5 612.5,625.5 613.5,620.5 615.1,620.5 616.7,620.5 618.3,620.5 619.9,620.5 621.5,620.5 623.1,620.5 624.7,620.5 626.3,620.5 627.9,620.5 629.5,620.5 631.1,620.5 632.7,620.5 634.3,620.5 635.9,620.5 637.4,620.5 639.0,620.5 640.6,620.5 642.2,620.5 643.8,620.5 645.4,620.5 647.0,620.5 648.6,620.5 650.2,620.5 651.8,620.5 653.4,620.5 655.0,620.5 656.6,620.5 658.2,620.5 659.8,620.5 661.4,620.5 663.0,620.5 664.6,620.5 666.2,620.5 667.8,620.5 669.4,620.5 671.0,620.5 672.6,620.5 674.2,620.5 675.8,620.5 677.4,620.5 679.0,620.5 680.6,620.5 682.1,620.5 683.7,620.5 685.3,620.5 686.9,620.5 688.5,620.5 690.1,620.5 691.7,620.5 693.3,620.5 694.9,620.5 696.5,620.5 698.1,620.5 699.7,620.5 701.3,620.5 702.9,620.5 704.5,620.5 705.5,625.5 707.1,625.5 708.7,625.5 710.3,625.5 711.9,625.5 713.5,625.5 715.1,625.5 716.7,625.4 718.3,625.4 719.9,625.4 721.5,625.4 723.1,625.4 724.7,625.4 726.3,625.4 727.9,625.4 729.5,625.4 731.1,625.4 732.7,625.4 734.3,625.4 735.9,625.3 737.5,625.3 739.1,625.3 740.7,625.3 742.3,625.3 743.9,625.3 745.5,625.3 747.1,625.3 748.7,625.3 750.3,625.3 751.9,625.3 753.5,625.3 755.0,625.2 756.6,625.2 758.2,625.2 759.8,625.2 761.4,625.2 763.0,625.2 764.6,625.2 766.2,625.2 767.8,625.2 769.4,625.2 771.0,625.2 772.6,625.2 774.2,625.1 775.8,625.1 777.4,625.1 779.0,625.1 780.6,625.1 782.2,625.1 783.8,625.1 785.4,625.1 787.0,625.1 788.6,625.1 790.2,625.1 791.8,625.1 793.4,625.0 795.0,625.0 796.6,625.0 798.2,625.0 799.8,625.0 801.4,625.0 803.0,625.0 804.6,625.0 806.2,625.0 807.8,625.0 809.4,625.0 811.0,625.0 812.6,625.0 814.2,624.9 815.8,624.9 817.4,624.9 819.0,624.9 820.6,624.9 822.2,624.9 823.8,624.9 825.4,624.9 827.0,624.9 828.6,624.9 830.2,624.9 831.8,624.9 833.4,624.8 835.0,624.8 836.6,624.8 838.2,624.8 839.8,624.8 841.4,624.8 843.0,624.8 844.6,624.8 846.2,624.8 847.8,624.8 849.4,624.8 851.0,624.8 852.5,624.7 854.1,624.7 855.7,624.7 857.3,624.7 858.9,624.7 860.5,624.7 862.1,624.7 863.7,624.7 865.3,624.7 866.9,624.7 868.5,624.7 870.1,624.7 871.7,624.6 873.3,624.6 874.9,624.6 876.5,624.6 878.1,624.6 879.7,624.6 881.3,624.6 882.9,624.6 884.5,624.6 886.1,624.6 887.7,624.6 889.3,624.6 890.9,624.5 892.5,624.5 894.1,624.5 895.7,624.5 897.3,624.5 898.9,624.5 900.5,624.5 902.0,623.5 903.5,622.5 905.0,621.5 906.5,620.5 908.0,620.1 909.5,619.8 911.0,619.4 912.5,619.0 914.0,618.6 915.5,618.2 917.0,617.9 918.5,617.5 920.1,616.5 921.6,615.5 923.2,614.5 924.7,613.5 926.3,612.5 927.8,611.5 929.4,610.5 930.9,609.5 932.5,608.5 934.2,609.8 936.0,611.0 937.8,612.2 939.5,613.5 941.2,617.2 942.8,620.8 944.5,624.5" fill="none" stroke="#40a8e0" stroke-width="1.25"/><polyline points="147.5,444.5 149.1,444.5 150.7,444.5 152.3,444.5 153.9,444.5 155.5,444.5 157.1,444.5 158.6,444.5 160.2,444.5 161.8,444.5 163.4,444.5 165.0,444.5 166.6,444.5 168.2,444.5 169.8,444.5 171.4,444.5 173.0,444.5 174.6,444.5 176.2,444.5 177.8,444.5 179.4,444.5 180.9,444.5 182.5,444.5 184.1,444.5 185.7,444.5 187.3,444.5 188.9,444.5 190.5,444.5 192.1,444.6 193.7,444.7 195.3,444.7 197.0,444.8 198.6,444.9 200.2,445.0 201.8,445.0 203.4,445.1 205.0,445.2 206.7,445.3 208.3,445.3 209.9,445.4 211.5,445.5 213.1,445.6 214.7,445.7 216.3,445.7 218.0,445.8 219.6,445.9 221.2,446.0 222.8,446.0 224.4,446.1 226.0,446.2 227.7,446.3 229.3,446.3 230.9,446.4 232.5,446.5 234.1,446.5 235.7,446.6 237.2,446.6 238.8,446.6 240.4,446.7 242.0,446.7 243.6,446.7 245.1,446.8 246.7,446.8 248.3,446.8 249.9,446.9 251.5,446.9 253.0,446.9 254.6,447.0 256.2,447.0 257.8,447.0 259.4,447.0 261.0,447.1 262.5,447.1 264.1,447.1 265.7,447.2 267.3,447.2 268.9,447.2 270.4,447.3 272.0,447.3 273.6,447.3 275.2,447.4 276.8,447.4 278.3,447.4 279.9,447.5 281.5,447.5 283.1,447.3 284.7,447.2 286.2,447.0 287.8,446.8 289.4,446.7 291.0,446.5 292.6,446.3 294.2,446.2 295.8,446.0 297.3,445.8 298.9,445.7 300.5,445.5 302.1,445.3 303.6,445.1 305.2,444.9 306.8,444.6 308.4,444.4 309.9,444.2 311.5,444.0 313.1,443.8 314.6,443.6 316.2,443.4 317.8,443.1 319.4,442.9 320.9,442.7 322.5,442.5 324.1,442.2 325.6,441.9 327.2,441.6 328.8,441.4 330.4,441.1 331.9,440.8 333.5,440.5 335.1,440.4 336.6,440.2 338.2,440.1 339.8,439.9 341.4,439.8 342.9,439.6 344.5,439.5 346.1,439.4 347.6,439.2 349.2,439.1 350.8,438.9 352.4,438.8 353.9,438.6 355.5,438.5 357.1,438.5 358.6,438.4 360.2,438.4 361.8,438.3 363.4,438.3 364.9,438.2 366.5,438.2 368.1,438.1 369.6,438.1 371.2,438.0 372.8,438.0 374.4,437.9 375.9,437.9 377.5,437.8 379.1,437.8 380.6,437.7 382.2,437.7 383.8,437.6 385.4,437.6 386.9,437.5 388.5,437.5 390.1,437.4 391.7,437.3 393.3,437.2 394.9,437.1 396.5,437.0 398.1,436.9 399.7,436.8 401.3,436.7 402.9,436.6 404.5,436.5 406.5,435.5 408.5,434.5 410.5,436.0 412.5,437.5 414.5,436.0 416.5,434.5 418.5,436.0 420.5,437.5 422.5,436.0 424.5,434.5 426.5,436.0 428.5,437.5 430.5,437.0 432.5,436.5 434.1,436.5 435.7,436.6 437.2,436.6 438.8,436.7 440.4,436.7 442.0,436.8 443.6,436.8 445.2,436.8 446.8,436.9 448.3,436.9 449.9,437.0 451.5,437.0 453.1,437.0 454.7,437.1 456.2,437.1 457.8,437.2 459.4,437.2 461.0,437.2 462.6,437.3 464.2,437.3 465.8,437.4 467.3,437.4 468.9,437.5 470.5,437.5 472.2,437.7 473.8,437.8 475.5,438.0 477.2,438.2 478.8,438.3 480.5,438.5 482.2,438.7 483.8,438.8 485.5,439.0 487.2,439.2 488.8,439.3 490.5,439.5 492.1,439.5 493.7,439.6 495.3,439.6 496.9,439.7 498.5,439.7 500.1,439.7 501.7,439.8 503.3,439.8 504.9,439.9 506.5,439.9 508.1,439.9 509.7,440.0 511.3,440.0 512.9,440.1 514.5,440.1 516.1,440.1 517.7,440.2 519.3,440.2 520.9,440.3 522.5,440.3 524.1,440.3 525.7,440.4 527.3,440.4 528.9,440.5 530.5,440.5 532.2,441.2 534.0,442.0 535.8,442.8 537.5,443.5 539.1,443.6 540.6,443.6 542.2,443.7 543.8,443.8 545.3,443.8 546.9,443.9 548.4,443.9 550.0,444.0 551.6,444.1 553.1,444.1 554.7,444.2 556.2,444.2 557.8,444.3 559.4,444.4 560.9,444.4 562.5,444.5 564.1,444.6 565.8,444.7 567.4,444.8 569.0,444.9 570.7,445.0 572.3,445.0 574.0,445.1 575.6,445.2 577.2,445.3 578.9,445.4 580.5,445.5 582.1,445.7 583.7,445.9 585.3,446.1 586.9,446.3 588.5,446.5 590.1,446.7 591.7,446.9 593.3,447.1 594.9,447.3 596.5,447.5 598.1,447.5 599.7,447.6 601.3,447.6 602.9,447.6 604.5,447.6 606.1,447.7 607.7,447.7 609.3,447.7 610.9,447.7 612.6,447.8 614.2,447.8 615.8,447.8 617.4,447.8 619.0,447.9 620.6,447.9 622.2,447.9 623.8,447.9 625.4,448.0 627.0,448.0 628.6,448.0 630.2,448.1 631.8,448.1 633.4,448.1 635.0,448.1 636.6,448.2 638.2,448.2 639.8,448.2 641.4,448.2 643.1,448.3 644.7,448.3 646.3,448.3 647.9,448.3 649.5,448.4 651.1,448.4 652.7,448.4 654.3,448.4 655.9,448.5 657.5,448.5 659.0,448.1 660.5,447.8 662.0,447.4 663.5,447.0 665.0,446.6 666.5,446.2 668.0,445.9 669.5,445.5 671.1,445.5 672.6,445.5 674.2,445.5 675.8,445.5 677.4,445.5 678.9,445.5 680.5,445.5 682.1,445.2 683.7,445.0 685.3,444.7 686.9,444.5 688.5,444.2 690.1,443.9 691.6,443.7 693.2,443.4 694.8,443.2 696.4,442.9 698.0,442.6 699.6,442.4 701.2,442.1 702.8,441.9 704.4,441.6 706.0,441.4 707.6,441.1 709.2,440.8 710.8,440.6 712.4,440.3 713.9,440.1 715.5,439.8 717.1,439.5 718.7,439.3 720.3,439.0 721.9,438.8 723.5,438.5 725.1,438.2 726.7,437.9 728.3,437.6 729.9,437.3 731.5,437.0 733.2,436.7 734.8,436.4 736.4,436.1 738.0,435.8 739.6,435.5 741.2,435.2 742.8,434.8 744.4,434.5 746.0,434.2 747.6,433.9 749.2,433.6 750.8,433.3 752.5,433.0 754.1,432.7 755.7,432.4 757.3,432.1 758.9,431.8 760.5,431.5 762.1,431.4 763.7,431.2 765.3,431.1 766.9,431.0 768.5,430.8 770.0,430.7 771.6,430.5 773.2,430.4 774.8,430.3 776.4,430.1 778.0,430.0 779.6,429.9 781.2,429.7 782.8,429.6 784.4,429.5 786.0,429.3 787.5,429.2 789.1,429.0 790.7,428.9 792.3,428.8 793.9,428.6 795.5,428.5 797.1,428.5 798.7,428.5 800.3,428.5 801.8,428.5 803.4,428.5 805.0,428.5 806.6,428.5 808.2,428.5 809.8,428.5 811.4,428.5 812.9,428.5 814.5,428.5 816.1,428.5 817.7,428.5 819.3,428.5 820.9,428.5 822.5,428.5 824.0,428.5 825.6,428.5 827.2,428.5 828.8,428.5 830.4,428.5 832.0,428.5 833.5,428.5 835.1,428.5 836.7,428.5 838.3,428.5 839.9,428.5 841.5,428.5 843.1,428.5 844.6,428.5 846.2,428.5 847.8,428.5 849.4,428.5 851.0,428.5 852.6,428.5 854.2,428.5 855.7,428.5 857.3,428.5 858.9,428.5 860.5,428.5 862.1,428.6 863.7,428.6 865.3,428.7 866.9,428.7 868.4,428.8 870.0,428.9 871.6,428.9 873.2,429.0 874.8,429.0 876.4,429.1 878.0,429.1 879.6,429.2 881.1,429.3 882.7,429.3 884.3,429.4 885.9,429.4 887.5,429.5 889.1,429.6 890.7,429.6 892.3,429.7 893.9,429.7 895.4,429.8 897.0,429.9 898.6,429.9 900.2,430.0 901.8,430.0 903.4,430.1 905.0,430.1 906.6,430.2 908.1,430.3 909.7,430.3 911.3,430.4 912.9,430.4 914.5,430.5 916.1,430.6 917.7,430.7 919.3,430.8 920.9,430.9 922.5,431.0 924.1,431.1 925.7,431.2 927.3,431.3 928.9,431.4 930.5,431.5 932.1,431.6 933.7,431.7 935.3,431.8 936.9,431.9 938.5,432.0 940.1,432.1 941.7,432.2 943.3,432.3 944.9,432.4 946.5,432.5" fill="none" stroke="#f090f0" stroke-width="1.25"/><polyline points="147.5,436.5 149.0,432.9 150.5,430.1 152.0,426.6 153.5,423.6 155.0,428.4 156.5,432.4 158.0,437.1 159.5,443.0 161.5,455.7 163.5,469.1 165.0,481.2 166.5,491.5 168.0,497.5 169.5,502.5 171.0,504.2 172.5,505.0 174.5,499.7 176.0,497.5 177.5,494.5 179.0,496.3 180.5,497.7 182.0,499.4 183.5,502.9 185.5,494.6 187.0,488.7 188.5,482.8 190.5,471.5 192.5,458.4 194.5,454.0 196.5,449.2 198.2,445.8 199.8,444.0 201.5,439.0 203.0,443.3 204.5,444.3 206.2,446.7 207.8,446.8 209.5,443.7 211.0,443.1 212.5,442.8 214.0,445.3 215.5,442.2 217.2,441.4 218.8,438.3 220.5,437.5 222.5,438.0 224.0,430.3 225.5,423.9 227.5,420.9 229.5,419.3 231.2,418.3 232.8,419.4 234.5,419.1 236.2,417.7 237.8,414.3 239.5,410.0 241.5,411.1 243.5,409.5 245.5,408.8 247.5,406.8 249.5,403.4 251.5,397.2 253.5,398.0 255.5,394.8 257.2,394.2 258.8,393.9 260.5,398.1 262.2,400.0 263.8,397.4 265.5,401.8 267.0,391.1 268.5,381.0 270.0,390.6 271.5,401.7 273.5,398.1 275.5,390.5 277.0,398.0 278.5,400.5 280.0,412.0 281.5,418.8 283.0,412.7 284.5,404.6 286.5,417.5 288.5,434.7 290.5,412.7 292.5,392.6 294.0,392.9 295.5,388.4 297.0,393.2 298.5,398.1 300.0,412.5 301.5,425.0 303.5,435.9 305.5,447.0 307.5,456.2 309.5,465.1 311.5,473.1 313.5,477.3 315.5,482.4 317.2,484.3 319.0,486.2 320.8,487.9 322.5,489.6 324.0,491.0 325.5,492.8 327.0,493.5 328.5,494.7 330.0,496.5 331.5,497.1 333.1,497.9 334.6,499.6 336.2,499.7 337.8,500.4 339.4,500.4 340.9,501.7 342.5,502.6 344.0,502.5 345.5,504.0 347.0,504.7 348.5,504.6 350.0,506.0 351.5,506.5 353.1,507.6 354.6,508.0 356.2,509.4 357.8,510.3 359.4,510.1 360.9,511.0 362.5,512.7 364.1,513.8 365.8,513.4 367.4,514.3 369.0,515.1 370.6,515.4 372.2,516.1 373.9,516.6 375.5,517.3 377.1,518.3 378.8,518.5 380.4,519.2 382.0,520.4 383.6,520.0 385.2,521.3 386.9,522.2 388.5,522.2 390.1,522.4 391.6,523.6 393.2,523.1 394.7,523.4 396.3,524.1 397.8,524.8 399.4,524.3 400.9,524.9 402.5,525.3 404.0,527.0 405.5,527.4 407.0,529.0 408.5,529.0 410.0,530.3 411.5,531.7 413.0,533.0 414.5,533.4 416.0,534.1 417.5,535.0 419.0,537.0 420.5,538.1 422.0,540.4 423.5,542.0 425.0,542.6 426.5,544.2 428.1,545.9 429.6,546.7 431.2,547.9 432.8,548.3 434.4,549.0 435.9,550.2 437.5,551.9 439.2,552.3 440.8,553.6 442.5,554.9 444.2,556.1 445.8,557.2 447.5,559.1 449.1,559.4 450.7,560.6 452.3,563.3 453.9,564.6 455.5,566.2 457.0,566.2 458.5,567.6 460.0,568.3 461.5,568.1 463.2,568.5 464.8,568.3 466.5,567.7 468.5,565.5 470.5,563.2 472.2,565.0 474.0,566.6 475.8,568.1 477.5,570.6 479.1,571.0 480.7,572.5 482.3,572.3 483.9,574.3 485.5,574.8 487.2,576.3 489.0,577.6 490.8,578.8 492.5,579.6 494.2,578.2 495.8,578.5 497.5,577.0 499.2,573.6 500.8,570.4 502.5,566.5 504.2,564.6 506.0,563.6 507.8,561.4 509.5,559.3 511.1,558.0 512.7,557.6 514.3,555.9 515.9,555.1 517.5,553.3 519.2,544.1 520.8,535.5 522.5,526.9 524.0,517.0 525.5,508.9 527.0,500.1 528.5,490.9 530.5,482.0 532.5,470.3 534.5,470.1 536.0,467.6 537.5,460.5 539.5,453.5 541.0,449.5 542.5,446.6 543.5,437.2 545.0,442.9 546.5,449.7 548.0,444.3 549.5,442.5 551.5,444.9 553.5,456.8 555.0,461.1 556.5,469.6 558.5,464.1 560.0,465.2 561.5,471.5 563.0,468.2 564.5,465.7 566.0,459.8 567.5,455.1 569.5,442.9 571.5,457.9 573.5,432.1 575.0,434.2 576.5,434.8 578.0,435.2 579.5,434.5 581.0,430.0 582.5,425.7 584.5,432.1 586.5,433.4 588.5,435.0 590.5,448.7 592.5,452.5 594.5,459.8 596.0,457.0 597.5,454.2 599.0,454.9 600.5,456.5 602.5,445.4 604.5,423.2 606.5,421.4 608.5,417.3 610.5,415.4 612.5,415.7 614.2,413.4 615.8,407.6 617.5,406.2 619.5,403.7 621.5,403.2 623.1,399.8 624.7,393.7 626.3,392.5 627.9,388.4 629.5,382.5 631.0,384.8 632.5,384.8 634.0,389.4 635.5,390.2 637.2,385.5 638.8,379.5 640.5,373.2 642.0,375.5 643.5,376.8 645.0,376.8 646.5,380.9 648.2,374.8 650.0,371.9 651.8,371.2 653.5,364.5 655.2,367.5 657.0,370.2 658.8,376.4 660.5,376.1 662.0,373.1 663.5,374.3 665.0,368.8 666.5,369.7 668.0,366.6 669.5,365.0 671.0,363.5 672.5,359.8 674.0,358.8 675.5,353.5 677.5,359.2 679.5,360.5 681.0,380.4 682.5,396.8 684.5,376.6 686.2,381.1 687.8,380.9 689.5,385.7 691.5,375.3 693.5,364.9 695.5,373.9 697.5,385.1 699.2,388.4 700.8,393.0 702.5,396.6 704.5,405.0 706.5,415.3 708.0,418.9 709.5,422.3 711.0,425.9 712.5,428.9 714.2,433.5 715.8,438.2 717.5,441.4 719.0,443.8 720.5,445.0 722.0,447.8 723.5,449.9 725.0,450.6 726.5,451.2 728.0,452.0 729.5,453.0 731.0,454.2 732.5,454.0 734.2,454.4 735.8,455.8 737.5,456.6 739.2,456.5 740.8,456.9 742.5,457.8 744.2,457.7 745.8,458.5 747.5,459.1 749.2,460.3 750.8,460.6 752.5,461.1 754.2,463.3 756.0,465.1 757.8,465.7 759.5,467.8 761.1,468.2 762.7,469.6 764.3,470.0 765.9,470.4 767.5,471.1 769.0,470.8 770.5,471.5 772.0,471.3 773.5,471.0 775.0,471.3 776.5,471.3 778.0,471.9 779.5,471.0 781.0,472.7 782.5,472.5 784.0,473.1 785.5,473.5 787.0,474.5 788.5,475.0 790.0,475.1 791.5,475.5 793.1,476.1 794.8,476.5 796.4,476.1 798.0,476.8 799.6,477.4 801.2,477.0 802.9,476.9 804.5,477.1 806.0,478.4 807.5,479.0 809.0,480.0 810.5,480.5 812.0,480.3 813.5,480.8 815.0,481.5 816.5,482.1 818.0,483.5 819.5,484.5 821.0,485.3 822.5,485.2 824.0,486.8 825.5,486.7 827.0,487.6 828.5,488.8 830.0,488.7 831.5,489.4 833.0,491.2 834.5,491.2 836.0,492.0 837.5,493.1 839.0,494.0 840.5,493.8 842.1,495.0 843.6,495.8 845.2,496.6 846.8,497.0 848.4,498.2 849.9,499.4 851.5,499.3 853.0,501.2 854.5,502.3 856.0,504.2 857.5,506.4 859.0,507.3 860.5,510.0 862.0,511.4 863.5,511.6 865.0,514.1 866.5,514.7 868.0,516.5 869.5,517.9 871.2,517.7 872.8,518.7 874.5,519.2 876.2,519.9 877.8,519.7 879.5,520.9 881.1,521.7 882.6,521.9 884.2,522.3 885.8,522.2 887.4,523.3 888.9,523.7 890.5,524.8 892.2,524.1 893.8,523.3 895.5,522.1 897.2,522.0 898.8,521.3 900.5,520.1 902.2,518.8 904.0,516.2 905.8,513.2 907.5,512.1 909.2,505.7 911.0,500.8 912.8,496.1 914.5,490.6 916.0,483.6 917.5,476.7 919.0,469.4 920.5,462.2 922.2,457.5 924.0,452.9 925.8,449.3 927.5,444.9 929.2,440.3 931.0,436.3 932.8,431.6 934.5,427.2 936.2,425.0 937.8,423.4 939.5,419.9 941.2,418.2 942.8,415.5 944.5,413.9 946.5,418.5" fill="none" stroke="#ff3030" stroke-width="1.25"/><polyline points="147.5,436.5 149.0,433.6 150.5,430.7 152.0,427.4 153.5,424.6 155.0,426.7 156.5,430.5 158.0,429.2 159.5,434.3 161.5,444.6 163.5,451.2 165.5,462.4 167.5,468.6 169.5,479.4 171.5,487.3 173.0,489.7 174.5,490.9 176.0,487.2 177.5,487.1 179.5,485.4 181.5,486.5 183.5,485.3 185.5,481.9 187.0,485.9 188.5,483.8 190.0,481.1 191.5,473.7 193.0,459.1 194.5,449.3 196.5,427.1 198.0,420.6 199.5,417.8 201.0,413.3 202.5,406.5 204.5,418.7 206.5,425.7 208.5,427.9 210.5,427.1 212.0,429.4 213.5,426.9 215.0,427.0 216.5,425.4 218.0,419.5 219.5,416.8 221.0,412.9 222.5,409.8 224.5,402.9 226.5,397.5 228.5,397.0 230.5,392.1 232.5,393.4 234.5,389.7 236.2,386.9 237.8,386.7 239.5,382.4 241.5,379.6 243.5,378.4 245.2,377.8 246.8,373.0 248.5,375.8 250.0,367.2 251.5,366.7 253.5,364.2 255.5,357.2 257.5,359.9 259.5,356.9 261.2,357.2 262.8,353.8 264.5,353.3 266.0,344.5 267.5,338.7 269.0,340.0 270.5,347.7 272.5,350.6 274.5,352.6 276.0,346.8 277.5,343.8 279.5,345.6 281.5,347.8 283.0,345.1 284.5,348.7 286.0,349.4 287.5,350.2 289.5,348.8 291.5,355.6 293.0,347.3 294.5,344.2 296.0,341.3 297.5,338.5 299.5,344.2 301.5,355.5 303.0,361.7 304.5,368.6 306.0,381.1 307.5,393.0 309.5,403.5 311.5,408.8 313.5,416.4 315.2,418.4 317.0,414.9 318.8,414.8 320.5,419.8 322.5,418.7 324.5,419.0 326.2,419.5 328.0,422.5 329.8,424.8 331.5,424.3 333.0,424.4 334.5,422.9 336.0,427.2 337.5,423.3 339.5,424.5 341.5,425.1 343.5,422.7 345.5,426.6 347.5,431.2 349.5,433.1 351.2,435.5 352.8,433.9 354.5,437.2 356.0,436.6 357.5,440.7 359.0,438.8 360.5,440.3 362.5,443.4 364.5,443.2 366.2,445.1 367.8,443.9 369.5,445.4 371.5,449.6 373.5,451.4 375.2,451.5 376.8,453.0 378.5,452.8 380.2,454.6 381.8,458.2 383.5,458.7 385.5,457.1 387.5,456.5 389.5,458.7 391.5,460.5 393.5,461.9 395.5,464.9 397.2,466.6 398.8,465.5 400.5,468.9 402.5,471.8 404.5,474.4 406.0,474.5 407.5,475.2 409.0,473.6 410.5,475.5 412.0,476.4 413.5,480.4 415.0,492.8 416.5,503.4 418.2,503.8 419.8,509.3 421.5,510.2 423.2,513.6 424.8,514.5 426.5,520.7 428.2,515.6 429.8,514.0 431.5,509.3 433.5,514.0 435.5,516.2 437.2,521.9 439.0,524.8 440.8,531.2 442.5,536.6 444.0,538.6 445.5,537.8 447.0,541.6 448.5,543.3 450.0,543.9 451.5,546.8 453.1,548.1 454.7,547.4 456.3,548.8 457.9,548.5 459.5,553.1 461.0,554.6 462.5,553.4 464.0,555.4 465.5,556.6 467.1,553.2 468.7,547.1 470.3,546.6 471.9,542.3 473.5,539.3 475.2,540.1 477.0,543.1 478.8,545.8 480.5,547.2 482.0,550.1 483.5,549.2 485.0,552.4 486.5,556.2 488.0,559.2 489.5,559.2 491.0,563.4 492.5,565.1 494.5,564.3 496.5,568.4 498.2,559.9 499.8,551.7 501.5,544.7 503.2,543.3 504.8,540.3 506.5,538.0 508.0,536.8 509.5,538.3 511.0,537.4 512.5,538.0 514.2,536.3 515.8,532.9 517.5,534.4 519.5,502.1 521.2,496.7 522.8,488.8 524.5,482.1 526.0,479.7 527.5,482.1 529.5,466.9 531.5,452.3 533.0,454.0 534.5,450.6 536.5,448.7 538.5,443.7 540.0,441.4 541.5,439.7 543.0,438.5 544.5,436.1 546.0,443.0 547.5,447.2 549.0,442.9 550.5,438.8 552.0,439.5 553.5,437.8 555.0,434.7 556.5,429.7 558.0,429.5 559.5,429.8 561.0,429.9 562.5,423.1 564.5,417.1 566.5,412.8 568.0,411.1 569.5,406.8 571.5,408.1 573.5,408.4 575.5,404.9 577.5,404.2 579.0,400.9 580.5,399.0 582.0,400.0 583.5,394.9 585.0,395.5 586.5,393.2 588.0,389.5 589.5,385.7 591.0,387.0 592.5,382.5 594.2,378.8 595.8,375.0 597.5,374.8 599.0,370.2 600.5,367.0 602.0,365.6 603.5,361.7 605.0,361.1 606.5,357.2 608.0,354.7 609.5,355.2 611.0,353.6 612.5,347.8 614.0,348.5 615.5,345.4 617.2,346.6 618.8,343.9 620.5,339.3 622.0,338.1 623.5,336.2 625.0,338.8 626.5,334.2 628.0,334.4 629.5,332.4 631.0,330.9 632.5,328.5 634.0,326.9 635.5,321.7 637.2,322.7 638.8,318.5 640.5,317.7 642.0,314.7 643.5,312.5 645.0,311.6 646.5,309.3 648.0,307.3 649.5,307.7 651.0,305.4 652.5,301.3 654.2,303.3 655.8,305.3 657.5,308.5 659.0,306.1 660.5,302.2 662.0,297.4 663.5,298.8 665.0,296.4 666.5,296.4 668.0,296.2 669.5,295.1 671.0,290.9 672.5,289.5 674.0,283.5 675.5,280.0 677.2,286.2 678.8,287.0 680.5,291.5 682.0,293.6 683.5,289.4 685.0,292.6 686.5,291.4 688.2,287.8 689.8,284.8 691.5,284.8 693.2,286.8 694.8,284.5 696.5,287.4 698.2,285.4 699.8,282.8 701.5,279.7 703.0,290.3 704.5,303.9 706.2,320.3 707.8,332.1 709.5,348.2 711.2,356.7 712.8,362.2 714.5,367.3 716.0,365.7 717.5,370.6 719.0,373.3 720.5,374.9 722.2,373.0 724.0,369.3 725.8,372.6 727.5,369.2 729.0,370.9 730.5,372.2 732.0,370.8 733.5,367.7 735.5,372.5 737.5,379.5 739.0,376.3 740.5,379.0 742.0,378.6 743.5,377.9 745.0,380.6 746.5,378.3 748.2,380.9 750.0,384.4 751.8,385.2 753.5,387.4 755.0,392.6 756.5,396.2 758.0,399.6 759.5,398.7 761.5,410.2 763.5,419.6 765.0,415.7 766.5,409.9 768.0,406.9 769.5,398.9 771.0,398.4 772.5,402.4 774.0,400.8 775.5,404.1 777.1,404.1 778.7,406.7 780.3,405.6 781.9,406.5 783.5,405.4 785.0,407.5 786.5,406.8 788.0,410.0 789.5,409.6 791.0,408.5 792.5,409.7 794.0,411.1 795.5,413.6 797.1,411.8 798.6,415.2 800.2,415.8 801.8,413.9 803.4,417.6 804.9,415.7 806.5,416.7 808.1,419.7 809.6,418.7 811.2,422.5 812.8,421.3 814.4,421.2 815.9,424.2 817.5,421.2 819.0,425.7 820.5,423.7 822.0,425.3 823.5,430.3 825.0,430.2 826.5,429.2 828.5,434.2 830.5,443.8 832.2,440.6 833.8,439.7 835.5,434.8 837.2,439.8 838.8,441.1 840.5,443.2 842.0,446.4 843.5,450.5 845.0,452.0 846.5,455.0 848.2,452.1 849.8,453.8 851.5,451.2 853.2,456.7 855.0,459.7 856.8,466.4 858.5,469.6 860.2,474.4 862.0,478.9 863.8,484.2 865.5,487.0 867.2,489.1 869.0,492.3 870.8,496.6 872.5,499.3 874.0,502.4 875.5,499.4 877.0,499.7 878.5,495.1 880.0,496.4 881.5,497.4 883.2,497.6 885.0,498.2 886.8,499.8 888.5,499.6 890.2,498.1 892.0,496.4 893.8,495.6 895.5,494.0 897.2,499.0 898.8,498.2 900.5,501.3 902.2,501.2 904.0,500.4 905.8,500.7 907.5,500.2 909.2,496.9 911.0,490.3 912.8,490.0 914.5,482.9 916.2,477.4 918.0,467.9 919.8,459.6 921.5,450.4 923.2,452.9 925.0,449.2 926.8,452.1 928.5,450.5 930.0,445.3 931.5,438.6 933.0,428.9 934.5,422.1 936.2,417.0 938.0,413.7 939.8,408.7 941.5,406.0 943.2,405.1 944.8,398.5 946.5,395.5" fill="none" stroke="#ffff70" stroke-width="1.25"/><polyline points="147.5,430.5 149.0,427.8 150.5,425.2 152.0,426.0 153.5,421.3 155.0,426.9 156.5,429.3 158.0,431.0 159.5,436.5 161.5,443.6 163.5,455.2 165.5,464.3 167.5,475.4 169.5,484.6 171.5,494.2 173.0,494.0 174.5,498.1 176.0,495.7 177.5,492.8 179.5,487.9 181.5,484.0 183.5,486.5 185.5,481.1 187.0,486.4 188.5,484.4 190.0,478.7 191.5,473.5 193.5,449.5 195.5,417.1 197.0,410.8 198.5,409.9 200.0,402.2 201.5,392.8 203.0,394.7 204.5,393.2 206.5,395.2 208.5,398.0 210.0,398.9 211.5,396.1 213.0,394.0 214.5,393.9 216.2,390.9 217.8,387.8 219.5,388.0 221.0,381.0 222.5,372.2 224.5,365.9 226.5,357.6 228.0,355.5 229.5,350.7 231.5,348.9 233.5,353.0 235.0,346.5 236.5,346.1 238.0,345.8 239.5,340.7 241.0,337.4 242.5,330.1 244.0,335.9 245.5,338.9 247.5,331.9 249.5,327.5 251.5,318.5 253.0,319.5 254.5,318.0 256.0,318.4 257.5,318.3 259.2,318.6 260.8,317.5 262.5,313.4 264.2,312.4 265.8,307.2 267.5,308.5 269.0,311.3 270.5,316.1 272.0,314.2 273.5,310.4 275.0,308.4 276.5,307.4 278.0,308.5 279.5,315.3 281.5,313.3 283.5,312.5 285.5,340.2 287.5,351.4 289.5,355.6 291.5,345.2 293.0,352.4 294.5,361.4 296.5,350.3 298.0,362.7 299.5,373.8 301.0,386.0 302.5,396.2 304.0,403.4 305.5,407.3 307.0,423.1 308.5,437.8 310.5,438.5 312.5,436.9 314.2,430.4 315.8,428.1 317.5,426.1 319.0,429.1 320.5,433.4 322.5,431.0 324.5,426.3 326.2,426.6 327.8,430.4 329.5,431.8 331.5,433.8 333.5,436.9 335.0,435.5 336.5,434.6 338.0,435.1 339.5,435.4 341.5,434.2 343.5,440.6 345.0,441.5 346.5,443.4 348.2,444.5 350.0,443.9 351.8,445.5 353.5,445.4 355.2,450.4 357.0,449.7 358.8,452.0 360.5,455.0 362.5,451.2 364.5,448.7 366.2,448.8 367.8,450.2 369.5,452.7 371.5,456.9 373.5,462.8 375.5,464.0 377.5,471.4 379.2,469.1 380.8,465.7 382.5,465.2 384.5,464.2 386.5,462.8 388.5,466.0 390.5,474.3 392.5,477.1 394.5,476.3 396.5,476.9 398.5,475.3 400.2,477.4 401.8,480.7 403.5,482.3 405.0,489.2 406.5,489.7 408.2,487.7 409.8,491.2 411.5,487.6 413.0,494.2 414.5,504.7 416.5,510.0 418.5,520.6 420.5,526.0 422.5,528.4 424.2,531.2 425.8,532.6 427.5,536.8 429.2,533.8 430.8,534.9 432.5,531.7 434.2,536.6 435.8,537.9 437.5,541.1 439.2,547.4 441.0,551.5 442.8,554.1 444.5,557.1 446.0,557.7 447.5,557.7 449.0,555.6 450.5,557.6 452.0,558.0 453.5,557.6 455.0,558.8 456.5,561.4 458.2,562.6 459.8,566.2 461.5,568.9 463.5,566.2 465.5,568.8 467.0,566.3 468.5,563.4 470.0,557.5 471.5,554.0 473.5,557.6 475.5,560.9 477.0,561.5 478.5,564.1 480.0,566.1 481.5,566.3 483.0,566.1 484.5,568.8 486.0,571.3 487.5,569.3 489.2,574.0 490.8,577.0 492.5,578.0 494.2,577.5 495.8,575.7 497.5,573.8 499.5,570.0 501.5,560.6 503.5,559.6 505.5,557.0 507.5,551.5 509.5,549.0 511.2,548.6 513.0,544.2 514.8,538.0 516.5,534.6 518.0,522.7 519.5,514.6 521.0,499.1 522.5,480.7 524.0,467.7 525.5,452.0 527.0,454.8 528.5,457.7 530.5,478.8 532.0,454.6 533.5,432.0 535.5,438.9 537.5,422.3 539.5,415.1 541.5,410.8 543.5,400.2 545.5,412.4 547.5,438.2 549.5,443.0 551.5,439.2 553.0,434.4 554.5,429.2 556.5,428.9 558.5,430.2 560.5,434.1 562.0,426.6 563.5,424.6 565.0,416.7 566.5,412.3 568.0,410.4 569.5,409.6 571.0,408.1 572.5,411.7 574.1,406.9 575.7,404.5 577.3,401.8 578.9,396.6 580.5,396.2 582.2,392.4 584.0,388.9 585.8,390.6 587.5,384.8 589.0,382.1 590.5,379.2 592.0,374.0 593.5,368.6 595.5,372.6 597.5,375.8 599.2,372.0 600.8,363.5 602.5,360.8 604.5,325.2 606.2,323.3 607.8,323.9 609.5,320.5 611.0,317.6 612.5,315.4 614.0,312.9 615.5,307.2 617.2,306.4 618.8,304.2 620.5,302.6 622.0,302.3 623.5,299.8 625.0,298.9 626.5,297.4 628.5,296.3 630.5,291.5 632.2,292.5 633.8,292.8 635.5,289.2 637.5,296.8 639.2,289.8 640.8,280.3 642.5,267.6 644.0,274.5 645.5,283.2 647.5,274.3 649.5,268.2 651.1,266.1 652.7,268.0 654.3,267.4 655.9,266.8 657.5,261.7 659.0,263.6 660.5,262.3 662.0,258.6 663.5,261.5 665.0,262.9 666.5,260.0 668.0,264.9 669.5,263.0 671.2,260.9 673.0,261.0 674.8,257.7 676.5,251.7 678.5,258.1 680.5,263.6 682.0,259.7 683.5,255.9 685.0,274.1 686.5,293.7 688.0,297.0 689.5,306.8 691.5,300.2 693.0,306.5 694.5,316.6 696.5,298.1 698.5,310.6 700.5,321.2 702.0,332.5 703.5,338.0 705.0,345.5 706.5,347.4 708.0,362.3 709.5,375.1 711.5,388.0 713.5,394.3 715.0,392.8 716.5,393.6 718.0,395.4 719.5,394.2 721.2,389.2 722.8,386.7 724.5,388.7 726.2,388.9 727.8,391.5 729.5,390.4 731.5,384.2 733.5,381.5 735.5,387.6 737.5,393.3 739.0,396.3 740.5,393.2 742.0,392.6 743.5,387.3 745.0,396.4 746.5,397.2 748.0,406.4 749.5,409.3 751.5,404.2 753.5,400.8 755.5,410.2 757.5,414.3 759.0,422.1 760.5,432.6 762.0,439.6 763.5,447.5 765.0,442.2 766.5,436.2 768.5,423.9 770.5,411.5 772.2,412.5 773.8,415.8 775.5,414.4 777.2,415.5 778.8,413.8 780.5,414.7 782.0,413.7 783.5,415.7 785.0,415.2 786.5,419.7 788.0,418.9 789.5,417.2 791.0,418.9 792.5,421.4 794.0,417.3 795.5,421.2 797.1,419.9 798.7,421.1 800.3,423.6 801.9,422.1 803.5,423.5 805.0,426.0 806.5,429.0 808.0,427.2 809.5,431.2 811.0,432.1 812.5,433.2 814.2,433.0 815.8,433.7 817.5,433.2 819.0,435.1 820.5,436.3 822.0,441.3 823.5,440.2 825.0,442.5 826.5,444.8 828.0,451.5 829.5,454.4 831.0,452.9 832.5,450.4 834.0,449.7 835.5,449.4 837.5,458.3 839.5,464.7 841.2,462.6 842.8,457.9 844.5,457.9 846.2,462.6 847.8,465.1 849.5,468.2 851.5,475.4 853.5,475.5 855.2,480.4 856.8,483.2 858.5,489.9 860.2,494.9 862.0,499.5 863.8,502.4 865.5,508.5 867.2,507.2 869.0,509.8 870.8,510.1 872.5,513.0 874.1,511.4 875.6,511.6 877.2,513.3 878.8,513.3 880.4,515.4 881.9,515.4 883.5,516.8 885.2,517.6 887.0,519.1 888.8,521.2 890.5,519.9 892.2,518.3 894.0,520.5 895.8,514.9 897.5,516.7 899.0,515.6 900.5,511.8 902.0,515.2 903.5,514.9 905.0,512.8 906.5,512.7 908.1,509.3 909.7,502.0 911.3,500.2 912.9,496.3 914.5,494.2 916.0,487.6 917.5,481.2 919.0,473.4 920.5,468.5 922.0,453.0 923.5,438.5 925.5,441.6 927.5,446.1 929.0,452.6 930.5,459.8 932.0,450.9 933.5,447.2 935.0,438.3 936.5,431.2 938.2,421.8 939.8,412.8 941.5,402.4 943.0,384.9 944.5,374.0 946.5,371.5" fill="none" stroke="#40ff40" stroke-width="1.25"/><rect x="147" y="625" width="800" height="1" fill="#ffc0ff"/><rect x="147" y="642" width="800" height="40" fill="#000"/><rect x="947" y="642" width="1" height="41" fill="#fff"/><rect x="147" y="682" width="801" height="1" fill="#fff"/><rect x="147" y="658" width="800" height="2" fill="#e83030"/><rect x="147" y="679" width="800" height="1" fill="#2020c0"/><rect x="493" y="642" width="1" height="40" fill="#fff"/><rect x="147" y="684" width="1" height="6" fill="#000"/><rect x="307" y="684" width="1" height="6" fill="#000"/><rect x="467" y="684" width="1" height="6" fill="#000"/><rect x="627" y="684" width="1" height="6" fill="#000"/><rect x="787" y="684" width="1" height="6" fill="#000"/><rect x="947" y="684" width="1" height="6" fill="#000"/></svg>
<div class="t" style="right:887px;top:621px;font-size:11px;color:#000;letter-spacing:-0.25px;">0</div>
<div class="t" style="right:943px;top:621px;font-size:11px;color:#000;letter-spacing:-0.25px;">0 mm</div>
<div class="t" style="right:887px;top:596px;font-size:11px;color:#000;letter-spacing:-0.25px;">2</div>
<div class="t" style="right:943px;top:596px;font-size:11px;color:#000;letter-spacing:-0.25px;">1 mm</div>
<div class="t" style="right:887px;top:572px;font-size:11px;color:#000;letter-spacing:-0.25px;">4</div>
<div class="t" style="right:943px;top:572px;font-size:11px;color:#000;letter-spacing:-0.25px;">2 mm</div>
<div class="t" style="right:887px;top:547px;font-size:11px;color:#000;letter-spacing:-0.25px;">6</div>
<div class="t" style="right:943px;top:547px;font-size:11px;color:#000;letter-spacing:-0.25px;">3 mm</div>
<div class="t" style="right:887px;top:523px;font-size:11px;color:#000;letter-spacing:-0.25px;">8</div>
<div class="t" style="right:943px;top:523px;font-size:11px;color:#000;letter-spacing:-0.25px;">4 mm</div>
<div class="t" style="right:887px;top:498px;font-size:11px;color:#000;letter-spacing:-0.25px;">10</div>
<div class="t" style="right:943px;top:498px;font-size:11px;color:#000;letter-spacing:-0.25px;">5 mm</div>
<div class="t" style="right:887px;top:474px;font-size:11px;color:#000;letter-spacing:-0.25px;">12</div>
<div class="t" style="right:943px;top:474px;font-size:11px;color:#000;letter-spacing:-0.25px;">6 mm</div>
<div class="t" style="right:887px;top:449px;font-size:11px;color:#000;letter-spacing:-0.25px;">14</div>
<div class="t" style="right:943px;top:449px;font-size:11px;color:#000;letter-spacing:-0.25px;">7 mm</div>
<div class="t" style="right:887px;top:425px;font-size:11px;color:#000;letter-spacing:-0.25px;">16</div>
<div class="t" style="right:943px;top:425px;font-size:11px;color:#000;letter-spacing:-0.25px;">8 mm</div>
<div class="t" style="right:887px;top:400px;font-size:11px;color:#000;letter-spacing:-0.25px;">18</div>
<div class="t" style="right:943px;top:400px;font-size:11px;color:#000;letter-spacing:-0.25px;">9 mm</div>
<div class="t" style="right:887px;top:376px;font-size:11px;color:#000;letter-spacing:-0.25px;">20</div>
<div class="t" style="right:943px;top:376px;font-size:11px;color:#000;letter-spacing:-0.25px;">10 mm</div>
<div class="t" style="right:887px;top:351px;font-size:11px;color:#000;letter-spacing:-0.25px;">22</div>
<div class="t" style="right:943px;top:351px;font-size:11px;color:#000;letter-spacing:-0.25px;">11 mm</div>
<div class="t" style="right:887px;top:327px;font-size:11px;color:#000;letter-spacing:-0.25px;">24</div>
<div class="t" style="right:943px;top:327px;font-size:11px;color:#000;letter-spacing:-0.25px;">12 mm</div>
<div class="t" style="right:887px;top:302px;font-size:11px;color:#000;letter-spacing:-0.25px;">26</div>
<div class="t" style="right:943px;top:302px;font-size:11px;color:#000;letter-spacing:-0.25px;">13 mm</div>
<div class="t" style="right:887px;top:278px;font-size:11px;color:#000;letter-spacing:-0.25px;">28</div>
<div class="t" style="right:943px;top:278px;font-size:11px;color:#000;letter-spacing:-0.25px;">14 mm</div>
<div class="t" style="right:887px;top:253px;font-size:11px;color:#000;letter-spacing:-0.25px;">30</div>
<div class="t" style="right:943px;top:253px;font-size:11px;color:#000;letter-spacing:-0.25px;">15 mm</div>
<div class="t" style="left:-4px;top:429px;width:60px;text-align:center;transform:rotate(-90deg);transform-origin:30px 6px;line-height:13px">Niederschlag</div>
<div class="a" style="left:36px;top:643px;width:101px;height:17px;background:#ff0000"></div>
<div class="t" style="left:-64px;width:300px;text-align:center;top:644px;font-size:11px;color:#fff;letter-spacing:-0.25px;">Offline</div>
<div class="a" style="left:36px;top:665px;width:101px;height:17px;background:#0000ff"></div>
<div class="t" style="left:-64px;width:300px;text-align:center;top:667px;font-size:11px;color:#fff;letter-spacing:-0.25px;">Beregnung</div>
<div class="t" style="left:-3px;width:300px;text-align:center;top:692px;font-size:11px;color:#000;letter-spacing:0.2px;">03/05/03 09:14</div>
<div class="t" style="left:157px;width:300px;text-align:center;top:692px;font-size:11px;color:#000;letter-spacing:0.2px;">03/05/03 18:49</div>
<div class="t" style="left:317px;width:300px;text-align:center;top:692px;font-size:11px;color:#000;letter-spacing:0.2px;">04/05/03 04:24</div>
<div class="t" style="left:477px;width:300px;text-align:center;top:692px;font-size:11px;color:#000;letter-spacing:0.2px;">04/05/03 13:58</div>
<div class="t" style="left:637px;width:300px;text-align:center;top:692px;font-size:11px;color:#000;letter-spacing:0.2px;">04/05/03 23:33</div>
<div class="t" style="left:797px;width:300px;text-align:center;top:692px;font-size:11px;color:#000;letter-spacing:0.2px;">05/05/03 09:08</div>
<div class="a" style="left:479px;top:708px;width:119px;height:17px;box-sizing:border-box;border:1px solid;border-color:#000 #fff #fff #000;background:#fff"></div>
<div class="t" style="left:388px;width:300px;text-align:center;top:710px;font-size:11px;color:#000;letter-spacing:-0.25px;">04.05.03 06:01:00</div>
<div class="a" style="left:952px;top:238px;width:41px;height:41px;box-sizing:border-box;border:1px solid;border-color:#000 #fff #fff #000;background:conic-gradient(#fff 25%, #d4d0c8 0 50%, #fff 0 75%, #d4d0c8 0) 0 0/2px 2px"></div>
<div class="a" style="left:953px;top:239px;width:39px;height:39px;box-sizing:border-box;border:1px solid;border-color:#808080 #d4d0c8 #d4d0c8 #808080"></div>
<svg class="a" style="left:952px;top:238px" width="41" height="41" viewBox="0 0 41 41"><path d="M17 6h2.5v5l3-0.5v1.5h3v1.5l3 0.5 0.5 6-3 6h-8.5l-6.5-10.5 1-1.5 5 3.5z" fill="#fff" stroke="#000" stroke-width="1.1" stroke-linejoin="round"/><path d="M19.5 10v4.5M22.5 11v4M25.5 13v2.5" stroke="#000" stroke-width="1"/><rect x="16.5" y="28" width="10.5" height="6" fill="#1414a8" stroke="#000" stroke-width="0.9"/></svg>
<div class="a" style="left:952px;top:286px;width:41px;height:41px;box-sizing:border-box;border:1px solid;border-color:#fff #404040 #404040 #fff;background:#d4d0c8"></div>
<div class="a" style="left:953px;top:287px;width:39px;height:39px;box-sizing:border-box;border:1px solid;border-color:#d4d0c8 #808080 #808080 #d4d0c8"></div>
<svg class="a" style="left:952px;top:286px" width="41" height="41" viewBox="0 0 41 41"><path d="M26 10.5l7-6" stroke="#181818" stroke-width="3.6" stroke-linecap="round"/><path d="M23 13l3-2.5" stroke="#fff" stroke-width="3"/><path d="M4 20v6a12.5 7 0 0 0 25 0v-6z" fill="#d4d4f0" stroke="#000" stroke-width="1.1"/><ellipse cx="16.5" cy="20" rx="12.5" ry="6.8" fill="#fff" stroke="#000" stroke-width="1.1"/><ellipse cx="16.5" cy="20" rx="9.3" ry="4.6" fill="#b4b4f0" stroke="#000" stroke-width="1.1"/></svg>
<div class="a" style="left:952px;top:334px;width:41px;height:41px;box-sizing:border-box;border:1px solid;border-color:#fff #404040 #404040 #fff;background:#d4d0c8"></div>
<div class="a" style="left:953px;top:335px;width:39px;height:39px;box-sizing:border-box;border:1px solid;border-color:#d4d0c8 #808080 #808080 #d4d0c8"></div>
<svg class="a" style="left:952px;top:334px" width="41" height="41" viewBox="0 0 41 41"><g fill="#38b0f0" stroke="#000" stroke-width="1" stroke-linejoin="miter"><path d="M19.5 3.5l6.5 6h-3.5v3.8h-6v-3.8h-3.5z"/><path d="M19.5 34.3l6.5-6.5h-3.5v-4.6h-6v4.6h-3.5z"/><path d="M4.3 18.5l6-6.2v3.2h4.2v6h-4.2v3.2z"/><path d="M35 18.5l-6-6.2v3.2h-4.6v6h4.6v3.2z"/></g></svg>
<div class="a" style="left:952px;top:382px;width:41px;height:41px;box-sizing:border-box;border:1px solid;border-color:#fff #404040 #404040 #fff;background:#d4d0c8"></div>
<div class="a" style="left:953px;top:383px;width:39px;height:39px;box-sizing:border-box;border:1px solid;border-color:#d4d0c8 #808080 #808080 #d4d0c8"></div>
<svg class="a" style="left:952px;top:382px" width="41" height="41" viewBox="0 0 41 41"><path d="M17.5 11.5l13.5 12.5" stroke="#000" stroke-width="2.8" stroke-linecap="round"/><path d="M15 9l3 2.8" stroke="#f0e878" stroke-width="2.2" stroke-linecap="round"/><path d="M15 9l3 2.8" stroke="#000" stroke-width="0.5" fill="none"/><g fill="#505050"><circle cx="23.5" cy="6.5" r="0.9"/><circle cx="30.5" cy="4.2" r="0.9"/><circle cx="32.5" cy="8.5" r="0.9"/><circle cx="27.5" cy="11.5" r="0.9"/><circle cx="34.5" cy="13" r="0.9"/></g><path d="M9.5 30l8-2 6 1.5-8 3z" fill="#f0e070" stroke="#000" stroke-width="1"/><path d="M13 19.5l3.5-2.5 3.5 1.5v10.5l-3.5 2-3.5-2z" fill="#e01878" stroke="#400018" stroke-width="1"/><circle cx="10.8" cy="24.5" r="4.8" fill="#40e8f0" stroke="#003040" stroke-width="1"/></svg>
<div class="a" style="left:952px;top:431px;width:41px;height:41px;box-sizing:border-box;border:1px solid;border-color:#000 #fff #fff #000;background:conic-gradient(#fff 25%, #d4d0c8 0 50%, #fff 0 75%, #d4d0c8 0) 0 0/2px 2px"></div>
<div class="a" style="left:953px;top:432px;width:39px;height:39px;box-sizing:border-box;border:1px solid;border-color:#808080 #d4d0c8 #d4d0c8 #808080"></div>
<svg class="a" style="left:952px;top:431px" width="41" height="41" viewBox="0 0 41 41"><g fill="#000"><rect x="7" y="21" width="8" height="1"/><rect x="7" y="24" width="8" height="1"/><rect x="17" y="21" width="8" height="1"/><rect x="17" y="24" width="8" height="1"/><rect x="27" y="21" width="8" height="1"/><rect x="27" y="24" width="8" height="1"/></g></svg>
<div class="a" style="left:0px;top:745px;width:930px;height:22px;box-sizing:border-box;border:1px solid;border-color:#808080 #fff #fff #808080"></div>
<div class="a" style="left:932px;top:745px;width:51px;height:22px;box-sizing:border-box;border:1px solid;border-color:#808080 #fff #fff #808080"></div>
<div class="a" style="left:985px;top:745px;width:37px;height:22px;box-sizing:border-box;border:1px solid;border-color:#808080 #fff #fff #808080"></div>
<div class="t" style="left:937px;top:751px;font-size:11px;color:#000;letter-spacing:-0.25px;">05.05.03</div>
<div class="t" style="left:994px;top:751px;font-size:11px;color:#000;letter-spacing:-0.25px;">9:20</div>
</body></html>
